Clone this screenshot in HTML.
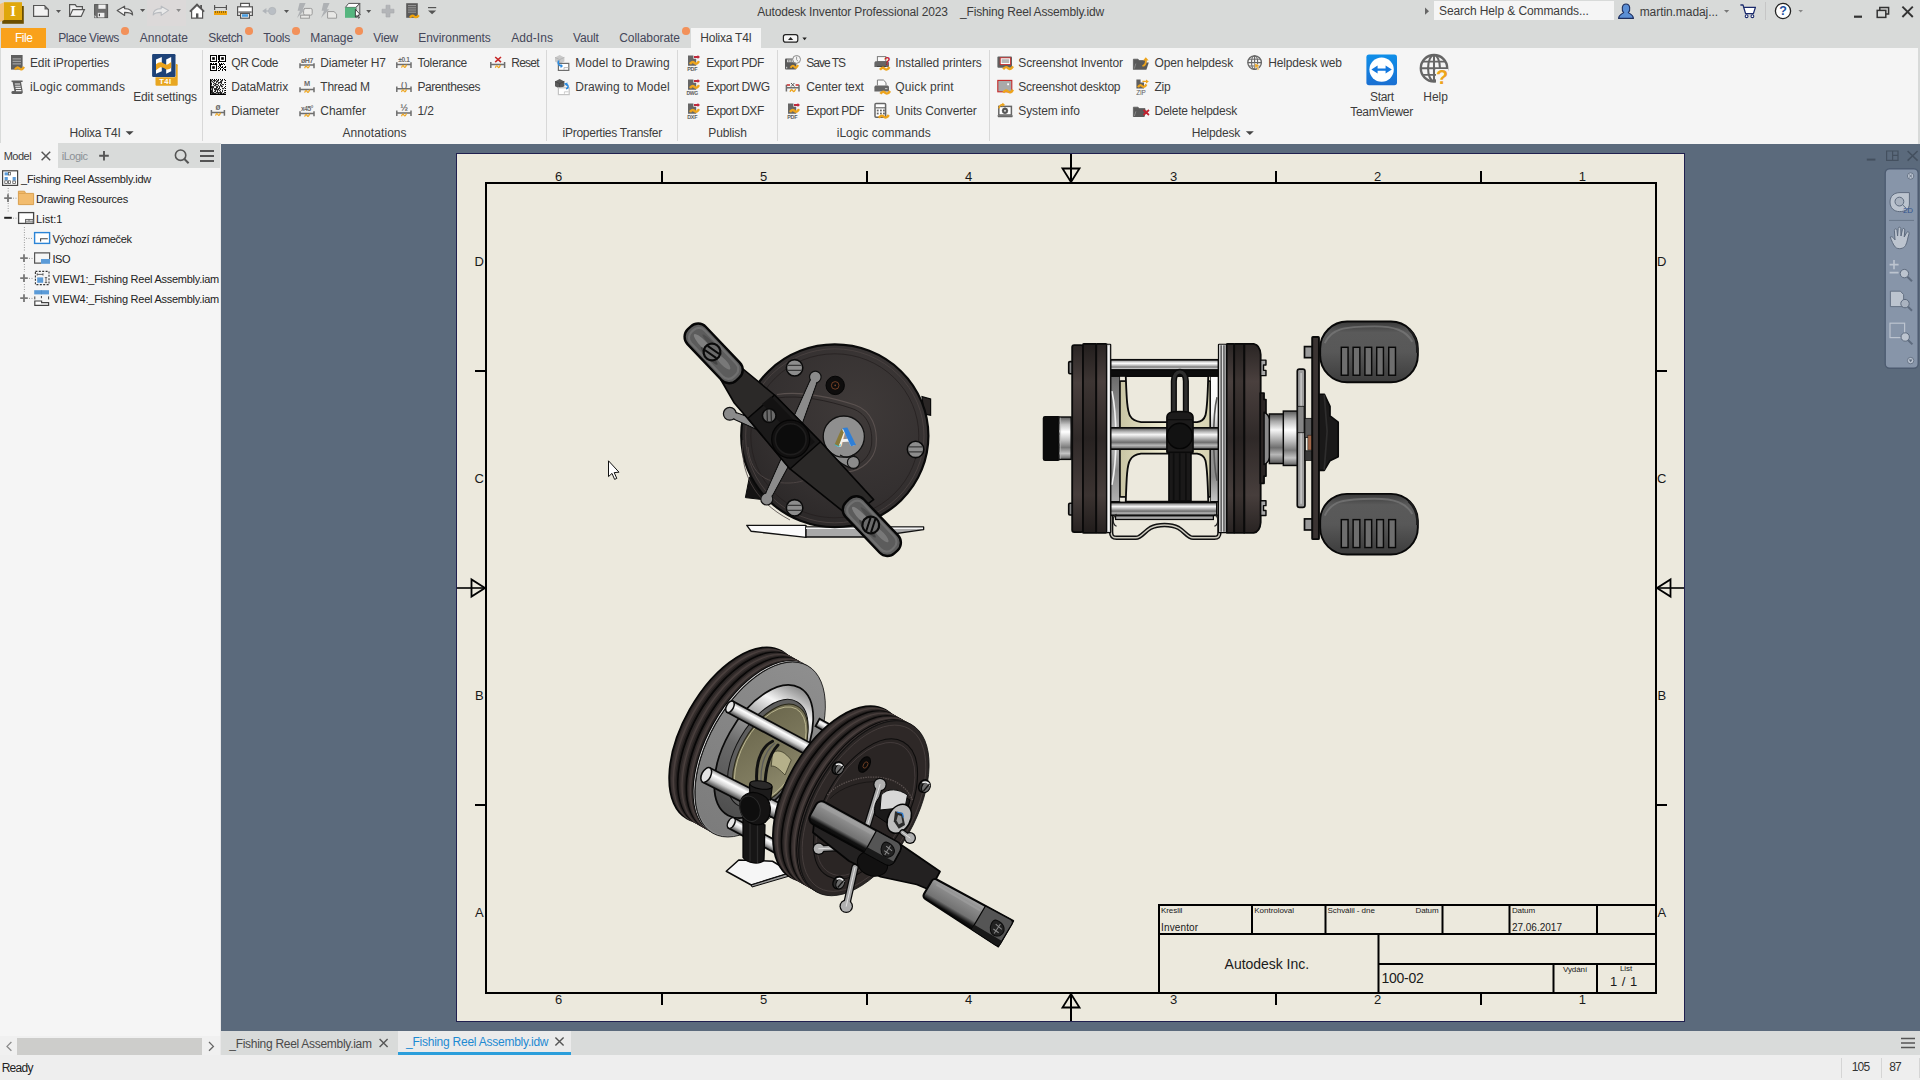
<!DOCTYPE html>
<html><head><meta charset="utf-8"><title>Autodesk Inventor Professional 2023 - _Fishing Reel Assembly.idw</title>
<style>
html,body{margin:0;padding:0;}
body{width:1920px;height:1080px;overflow:hidden;position:relative;background:#d8dad9;font-family:"Liberation Sans",sans-serif;}
.b{position:absolute;display:block;}
.t{position:absolute;white-space:pre;line-height:20px;height:20px;font-family:"Liberation Sans",sans-serif;}
svg{overflow:visible;}
svg text{font-family:"Liberation Sans",sans-serif;}
</style></head><body>
<div class="b" style="left:147px;top:0px;width:39px;height:26px;background:#dcd9d9;"></div>
<div class="b" style="left:1px;top:48px;width:1917px;height:96px;background:#f5f5f5;"></div>
<div class="b" style="left:1px;top:28px;width:45px;height:20px;background:#f9a11b;"></div>
<span class="t" style="left:15.0px;top:28px;font-size:12px;color:#ffffff;letter-spacing:-0.459px;">File</span>
<div class="b" style="left:691px;top:28px;width:70px;height:20px;background:#f5f5f5;"></div>
<span class="t" style="left:58.3px;top:28px;font-size:12px;color:#45475a;letter-spacing:-0.431px;">Place Views</span>
<span class="t" style="left:139.7px;top:28px;font-size:12px;color:#45475a;letter-spacing:0.032px;">Annotate</span>
<span class="t" style="left:208.3px;top:28px;font-size:12px;color:#45475a;letter-spacing:-0.414px;">Sketch</span>
<span class="t" style="left:263.3px;top:28px;font-size:12px;color:#45475a;letter-spacing:-0.263px;">Tools</span>
<span class="t" style="left:310.3px;top:28px;font-size:12px;color:#45475a;letter-spacing:-0.111px;">Manage</span>
<span class="t" style="left:373.3px;top:28px;font-size:12px;color:#45475a;letter-spacing:-0.273px;">View</span>
<span class="t" style="left:418.3px;top:28px;font-size:12px;color:#45475a;letter-spacing:-0.072px;">Environments</span>
<span class="t" style="left:511.3px;top:28px;font-size:12px;color:#45475a;letter-spacing:0.049px;">Add-Ins</span>
<span class="t" style="left:573.0px;top:28px;font-size:12px;color:#45475a;letter-spacing:-0.152px;">Vault</span>
<span class="t" style="left:619.2px;top:28px;font-size:12px;color:#45475a;letter-spacing:-0.052px;">Collaborate</span>
<span class="t" style="left:700.3px;top:28px;font-size:12px;color:#3c3c3c;letter-spacing:-0.240px;">Holixa T4I</span>
<div class="b" style="left:121.2px;top:27.2px;width:7.6px;height:7.6px;border-radius:50%;background:#f2915a"></div>
<div class="b" style="left:245.0px;top:27.2px;width:7.6px;height:7.6px;border-radius:50%;background:#f2915a"></div>
<div class="b" style="left:292.0px;top:27.2px;width:7.6px;height:7.6px;border-radius:50%;background:#f2915a"></div>
<div class="b" style="left:355.4px;top:27.2px;width:7.6px;height:7.6px;border-radius:50%;background:#f2915a"></div>
<div class="b" style="left:682.0px;top:27.2px;width:7.6px;height:7.6px;border-radius:50%;background:#f2915a"></div>
<span class="t" style="left:757.2px;top:2px;font-size:12px;color:#3c3c3c;letter-spacing:-0.161px;">Autodesk Inventor Professional 2023</span>
<span class="t" style="left:960.0px;top:2px;font-size:12px;color:#3c3c3c;letter-spacing:-0.173px;">_Fishing Reel Assembly.idw</span>
<div class="b" style="left:1434px;top:1px;width:180px;height:19px;background:#f5f5f5;"></div>
<span class="t" style="left:1439.0px;top:1px;font-size:12px;color:#3c3c3c;letter-spacing:-0.094px;">Search Help &amp; Commands...</span>
<span class="t" style="left:1639.7px;top:2px;font-size:12px;color:#3c3c3c;letter-spacing:-0.071px;">martin.madaj...</span>
<div class="b" style="left:202px;top:50px;width:1px;height:91px;background:#d8d8d8;"></div>
<div class="b" style="left:546px;top:50px;width:1px;height:91px;background:#d8d8d8;"></div>
<div class="b" style="left:677px;top:50px;width:1px;height:91px;background:#d8d8d8;"></div>
<div class="b" style="left:777px;top:50px;width:1px;height:91px;background:#d8d8d8;"></div>
<div class="b" style="left:989px;top:50px;width:1px;height:91px;background:#d8d8d8;"></div>
<span class="t" style="left:69.5px;top:123px;font-size:12px;color:#3c3c3c;letter-spacing:-0.280px;">Holixa T4I</span>
<span class="t" style="left:342.5px;top:123px;font-size:12px;color:#3c3c3c;letter-spacing:0.074px;">Annotations</span>
<span class="t" style="left:562.5px;top:123px;font-size:12px;color:#3c3c3c;letter-spacing:-0.260px;">iProperties Transfer</span>
<span class="t" style="left:708.3px;top:123px;font-size:12px;color:#3c3c3c;letter-spacing:-0.137px;">Publish</span>
<span class="t" style="left:836.7px;top:123px;font-size:12px;color:#3c3c3c;letter-spacing:0.048px;">iLogic commands</span>
<span class="t" style="left:1191.7px;top:123px;font-size:12px;color:#3c3c3c;letter-spacing:-0.216px;">Helpdesk</span>
<span class="t" style="left:30.0px;top:53px;font-size:12px;color:#3c3c3c;letter-spacing:-0.136px;">Edit iProperties</span>
<span class="t" style="left:30.0px;top:77px;font-size:12px;color:#3c3c3c;letter-spacing:0.108px;">iLogic commands</span>
<span class="t" style="left:231.3px;top:53px;font-size:12px;color:#3c3c3c;letter-spacing:-0.474px;">QR Code</span>
<span class="t" style="left:231.3px;top:77px;font-size:12px;color:#3c3c3c;letter-spacing:-0.131px;">DataMatrix</span>
<span class="t" style="left:231.3px;top:101px;font-size:12px;color:#3c3c3c;letter-spacing:-0.122px;">Diameter</span>
<span class="t" style="left:320.3px;top:53px;font-size:12px;color:#3c3c3c;letter-spacing:-0.169px;">Diameter H7</span>
<span class="t" style="left:320.3px;top:77px;font-size:12px;color:#3c3c3c;letter-spacing:-0.244px;">Thread M</span>
<span class="t" style="left:320.3px;top:101px;font-size:12px;color:#3c3c3c;letter-spacing:-0.073px;">Chamfer</span>
<span class="t" style="left:417.5px;top:53px;font-size:12px;color:#3c3c3c;letter-spacing:-0.281px;">Tolerance</span>
<span class="t" style="left:417.5px;top:77px;font-size:12px;color:#3c3c3c;letter-spacing:-0.443px;">Parentheses</span>
<span class="t" style="left:417.5px;top:101px;font-size:12px;color:#3c3c3c;letter-spacing:-0.127px;">1/2</span>
<span class="t" style="left:511.3px;top:53px;font-size:12px;color:#3c3c3c;letter-spacing:-0.770px;">Reset</span>
<span class="t" style="left:575.3px;top:53px;font-size:12px;color:#3c3c3c;letter-spacing:0.064px;">Model to Drawing</span>
<span class="t" style="left:575.3px;top:77px;font-size:12px;color:#3c3c3c;letter-spacing:0.064px;">Drawing to Model</span>
<span class="t" style="left:706.3px;top:53px;font-size:12px;color:#3c3c3c;letter-spacing:-0.452px;">Export PDF</span>
<span class="t" style="left:706.3px;top:77px;font-size:12px;color:#3c3c3c;letter-spacing:-0.394px;">Export DWG</span>
<span class="t" style="left:706.3px;top:101px;font-size:12px;color:#3c3c3c;letter-spacing:-0.452px;">Export DXF</span>
<span class="t" style="left:806.3px;top:53px;font-size:12px;color:#3c3c3c;letter-spacing:-1.015px;">Save TS</span>
<span class="t" style="left:806.3px;top:77px;font-size:12px;color:#3c3c3c;letter-spacing:-0.108px;">Center text</span>
<span class="t" style="left:806.3px;top:101px;font-size:12px;color:#3c3c3c;letter-spacing:-0.432px;">Export PDF</span>
<span class="t" style="left:895.3px;top:53px;font-size:12px;color:#3c3c3c;letter-spacing:-0.091px;">Installed printers</span>
<span class="t" style="left:895.3px;top:77px;font-size:12px;color:#3c3c3c;letter-spacing:0.104px;">Quick print</span>
<span class="t" style="left:895.3px;top:101px;font-size:12px;color:#3c3c3c;letter-spacing:-0.131px;">Units Converter</span>
<span class="t" style="left:1018.3px;top:53px;font-size:12px;color:#3c3c3c;letter-spacing:-0.152px;">Screenshot Inventor</span>
<span class="t" style="left:1018.3px;top:77px;font-size:12px;color:#3c3c3c;letter-spacing:-0.226px;">Screenshot desktop</span>
<span class="t" style="left:1018.3px;top:101px;font-size:12px;color:#3c3c3c;letter-spacing:-0.117px;">System info</span>
<span class="t" style="left:1154.5px;top:53px;font-size:12px;color:#3c3c3c;letter-spacing:-0.171px;">Open helpdesk</span>
<span class="t" style="left:1154.5px;top:77px;font-size:12px;color:#3c3c3c;letter-spacing:-0.223px;">Zip</span>
<span class="t" style="left:1154.5px;top:101px;font-size:12px;color:#3c3c3c;letter-spacing:-0.237px;">Delete helpdesk</span>
<span class="t" style="left:1268.3px;top:53px;font-size:12px;color:#3c3c3c;letter-spacing:-0.165px;">Helpdesk web</span>
<span class="t" style="left:133.2px;top:87px;font-size:12px;color:#3c3c3c;letter-spacing:-0.121px;">Edit settings</span>
<span class="t" style="left:1370.0px;top:87px;font-size:12px;color:#3c3c3c;letter-spacing:-0.308px;">Start</span>
<span class="t" style="left:1350.3px;top:102px;font-size:12px;color:#3c3c3c;letter-spacing:-0.331px;">TeamViewer</span>
<span class="t" style="left:1423.3px;top:87px;font-size:12px;color:#3c3c3c;letter-spacing:-0.045px;">Help</span>
<div class="b" style="left:0px;top:144px;width:220px;height:911px;background:#f5f5f5;"></div>
<div class="b" style="left:0px;top:143px;width:221px;height:25px;background:#d9dbda;"></div>
<div class="b" style="left:0px;top:143px;width:58px;height:25px;background:#f5f5f5;"></div>
<div class="b" style="left:220px;top:144px;width:1px;height:911px;background:#e8e8e8;"></div>
<span class="t" style="left:3.7px;top:146px;font-size:11px;color:#3c3c3c;letter-spacing:-0.492px;">Model</span>
<span class="t" style="left:61.7px;top:146px;font-size:11px;color:#8b9096;letter-spacing:-0.490px;">iLogic</span>
<span class="t" style="left:21.0px;top:169px;font-size:11px;color:#222;letter-spacing:-0.236px;">_Fishing Reel Assembly.idw</span>
<span class="t" style="left:36.0px;top:189px;font-size:11px;color:#222;letter-spacing:-0.234px;">Drawing Resources</span>
<span class="t" style="left:36.0px;top:209px;font-size:11px;color:#222;letter-spacing:0.035px;">List:1</span>
<span class="t" style="left:52.5px;top:229px;font-size:11px;color:#222;letter-spacing:-0.344px;">Výchozí rámeček</span>
<span class="t" style="left:52.5px;top:249px;font-size:11px;color:#222;letter-spacing:-0.483px;">ISO</span>
<span class="t" style="left:52.5px;top:269px;font-size:11px;color:#222;letter-spacing:-0.254px;">VIEW1:_Fishing Reel Assembly.iam</span>
<span class="t" style="left:52.5px;top:289px;font-size:11px;color:#222;letter-spacing:-0.254px;">VIEW4:_Fishing Reel Assembly.iam</span>
<div class="b" style="left:0px;top:1036px;width:220px;height:19px;background:#f0f0f0;"></div>
<div class="b" style="left:17px;top:1038px;width:185px;height:17px;background:#cdcdcb;"></div>
<div class="b" style="left:221px;top:144px;width:1699px;height:887px;background:#5b6a7c;"></div>
<div class="b" style="left:221px;top:1031px;width:1699px;height:24px;background:#d9dbda;"></div>
<div class="b" style="left:398px;top:1031px;width:173px;height:22px;background:#ebebeb;"></div>
<div class="b" style="left:398px;top:1052px;width:173px;height:3px;background:#2b9edb;"></div>
<span class="t" style="left:229.3px;top:1034px;font-size:12px;color:#4a4a4a;letter-spacing:-0.286px;">_Fishing Reel Assembly.iam</span>
<span class="t" style="left:406.0px;top:1032px;font-size:12px;color:#1e8ad2;letter-spacing:-0.239px;">_Fishing Reel Assembly.idw</span>
<div class="b" style="left:0px;top:1055px;width:1920px;height:25px;background:#eeeeee;"></div>
<span class="t" style="left:1.7px;top:1058px;font-size:12px;color:#222;letter-spacing:-0.737px;">Ready</span>
<span class="t" style="left:1851.7px;top:1057px;font-size:12px;color:#333;letter-spacing:-0.807px;">105</span>
<span class="t" style="left:1889.3px;top:1057px;font-size:12px;color:#333;letter-spacing:-0.974px;">87</span>
<div class="b" style="left:1841px;top:1058px;width:1px;height:20px;background:#d5d5d5;"></div>
<div class="b" style="left:1881px;top:1058px;width:1px;height:20px;background:#d5d5d5;"></div>
<div class="b" style="left:1919px;top:1058px;width:1px;height:20px;background:#d5d5d5;"></div>
<div class="b" style="left:456px;top:153px;width:1229px;height:869px;background:#20204f;"></div>
<div class="b" style="left:457px;top:154px;width:1227px;height:867px;background:#ece9dd;"></div>
<svg class="b" style="left:0px;top:0px;" width="1920" height="1080" viewBox="0 0 1920 1080"><rect x="486" y="183" width="1170" height="810" fill="none" stroke="#000" stroke-width="2"/><line x1="662" y1="171" x2="662" y2="183" stroke="#000" stroke-width="2"/><line x1="662" y1="993" x2="662" y2="1005" stroke="#000" stroke-width="2"/><line x1="867" y1="171" x2="867" y2="183" stroke="#000" stroke-width="2"/><line x1="867" y1="993" x2="867" y2="1005" stroke="#000" stroke-width="2"/><line x1="1276" y1="171" x2="1276" y2="183" stroke="#000" stroke-width="2"/><line x1="1276" y1="993" x2="1276" y2="1005" stroke="#000" stroke-width="2"/><line x1="1481" y1="171" x2="1481" y2="183" stroke="#000" stroke-width="2"/><line x1="1481" y1="993" x2="1481" y2="1005" stroke="#000" stroke-width="2"/><line x1="475" y1="371" x2="486" y2="371" stroke="#000" stroke-width="2"/><line x1="1656" y1="371" x2="1667" y2="371" stroke="#000" stroke-width="2"/><line x1="475" y1="805" x2="486" y2="805" stroke="#000" stroke-width="2"/><line x1="1656" y1="805" x2="1667" y2="805" stroke="#000" stroke-width="2"/><line x1="1071" y1="154" x2="1071" y2="183" stroke="#000" stroke-width="2"/><line x1="1071" y1="993" x2="1071" y2="1021" stroke="#000" stroke-width="2"/><path d="M1062.5 168.5 L1079.5 168.5 L1071 182 Z" fill="none" stroke="#000" stroke-width="1.8"/><path d="M1062.5 1007.5 L1079.5 1007.5 L1071 994 Z" fill="none" stroke="#000" stroke-width="1.8"/><line x1="457" y1="588" x2="486" y2="588" stroke="#000" stroke-width="1.6"/><line x1="1656" y1="588" x2="1684" y2="588" stroke="#000" stroke-width="1.6"/><path d="M471.5 579.5 L471.5 596.5 L485 588 Z" fill="none" stroke="#000" stroke-width="1.8"/><path d="M1670.5 579.5 L1670.5 596.5 L1657 588 Z" fill="none" stroke="#000" stroke-width="1.8"/><line x1="1158" y1="905" x2="1656" y2="905" stroke="#000" stroke-width="2"/><line x1="1158" y1="934" x2="1656" y2="934" stroke="#000" stroke-width="2"/><line x1="1378" y1="964" x2="1656" y2="964" stroke="#000" stroke-width="2"/><line x1="1159" y1="904" x2="1159" y2="993" stroke="#000" stroke-width="2"/><line x1="1252" y1="905" x2="1252" y2="934" stroke="#000" stroke-width="2"/><line x1="1325.5" y1="905" x2="1325.5" y2="934" stroke="#000" stroke-width="2"/><line x1="1442.5" y1="905" x2="1442.5" y2="934" stroke="#000" stroke-width="2"/><line x1="1509.5" y1="905" x2="1509.5" y2="934" stroke="#000" stroke-width="2"/><line x1="1597" y1="905" x2="1597" y2="934" stroke="#000" stroke-width="2"/><line x1="1378.5" y1="934" x2="1378.5" y2="993" stroke="#000" stroke-width="2"/><line x1="1553.5" y1="964" x2="1553.5" y2="993" stroke="#000" stroke-width="2"/><line x1="1597" y1="964" x2="1597" y2="993" stroke="#000" stroke-width="2"/></svg>
<span class="t" style="left:555.1px;top:167px;font-size:13px;color:#1a1a1a;">6</span>
<span class="t" style="left:555.1px;top:990px;font-size:13px;color:#1a1a1a;">6</span>
<span class="t" style="left:759.9px;top:167px;font-size:13px;color:#1a1a1a;">5</span>
<span class="t" style="left:759.9px;top:990px;font-size:13px;color:#1a1a1a;">5</span>
<span class="t" style="left:964.9px;top:167px;font-size:13px;color:#1a1a1a;">4</span>
<span class="t" style="left:964.9px;top:990px;font-size:13px;color:#1a1a1a;">4</span>
<span class="t" style="left:1169.9px;top:167px;font-size:13px;color:#1a1a1a;">3</span>
<span class="t" style="left:1169.9px;top:990px;font-size:13px;color:#1a1a1a;">3</span>
<span class="t" style="left:1373.9px;top:167px;font-size:13px;color:#1a1a1a;">2</span>
<span class="t" style="left:1373.9px;top:990px;font-size:13px;color:#1a1a1a;">2</span>
<span class="t" style="left:1578.7px;top:167px;font-size:13px;color:#1a1a1a;">1</span>
<span class="t" style="left:1578.7px;top:990px;font-size:13px;color:#1a1a1a;">1</span>
<span class="t" style="left:474.5px;top:252px;font-size:13px;color:#1a1a1a;">D</span>
<span class="t" style="left:1657.0px;top:252px;font-size:13px;color:#1a1a1a;">D</span>
<span class="t" style="left:474.5px;top:469px;font-size:13px;color:#1a1a1a;">C</span>
<span class="t" style="left:1657.0px;top:469px;font-size:13px;color:#1a1a1a;">C</span>
<span class="t" style="left:474.9px;top:686px;font-size:13px;color:#1a1a1a;">B</span>
<span class="t" style="left:1657.4px;top:686px;font-size:13px;color:#1a1a1a;">B</span>
<span class="t" style="left:474.9px;top:903px;font-size:13px;color:#1a1a1a;">A</span>
<span class="t" style="left:1657.4px;top:903px;font-size:13px;color:#1a1a1a;">A</span>
<span class="t" style="left:1161.0px;top:901px;font-size:8px;color:#1a1a1a;letter-spacing:-0.069px;">Kreslil</span>
<span class="t" style="left:1254.3px;top:901px;font-size:8px;color:#1a1a1a;letter-spacing:-0.029px;">Kontroloval</span>
<span class="t" style="left:1327.5px;top:901px;font-size:8px;color:#1a1a1a;letter-spacing:-0.052px;">Schválil - dne</span>
<span class="t" style="left:1415.6px;top:901px;font-size:8px;color:#1a1a1a;letter-spacing:-0.152px;">Datum</span>
<span class="t" style="left:1511.9px;top:901px;font-size:8px;color:#1a1a1a;letter-spacing:-0.093px;">Datum</span>
<span class="t" style="left:1161.0px;top:918px;font-size:10px;color:#1a1a1a;letter-spacing:0.146px;">Inventor</span>
<span class="t" style="left:1511.9px;top:918px;font-size:10px;color:#1a1a1a;letter-spacing:0.005px;">27.06.2017</span>
<span class="t" style="left:1224.6px;top:954px;font-size:14px;color:#1a1a1a;letter-spacing:-0.033px;">Autodesk Inc.</span>
<span class="t" style="left:1381.5px;top:968px;font-size:14px;color:#1a1a1a;letter-spacing:-0.265px;">100-02</span>
<span class="t" style="left:1563.0px;top:960px;font-size:8px;color:#1a1a1a;letter-spacing:-0.102px;">Vydání</span>
<span class="t" style="left:1620.0px;top:959px;font-size:8px;color:#1a1a1a;letter-spacing:-0.112px;">List</span>
<span class="t" style="left:1610.0px;top:972px;font-size:13px;color:#1a1a1a;letter-spacing:0.481px;">1 / 1</span>
<svg class="b" style="left:0px;top:0px;" width="1920" height="1080" viewBox="0 0 1920 1080"><defs>
<radialGradient id="discg" cx="0.62" cy="0.35" r="0.8"><stop offset="0" stop-color="#3f3a39"/><stop offset="0.6" stop-color="#343030"/><stop offset="1" stop-color="#272424"/></radialGradient>
<linearGradient id="knobg" x1="0" y1="0" x2="0" y2="1"><stop offset="0" stop-color="#474747"/><stop offset="0.35" stop-color="#7c7c7c"/><stop offset="0.6" stop-color="#636363"/><stop offset="1" stop-color="#404040"/></linearGradient>
<linearGradient id="silverv" x1="0" y1="0" x2="0" y2="1"><stop offset="0" stop-color="#4a4a4a"/><stop offset="0.15" stop-color="#a8a8a8"/><stop offset="0.32" stop-color="#f6f6f6"/><stop offset="0.5" stop-color="#b4b4b4"/><stop offset="0.68" stop-color="#6e6e6e"/><stop offset="0.82" stop-color="#b8b8b8"/><stop offset="1" stop-color="#555"/></linearGradient>
<linearGradient id="silverv2" x1="0" y1="0" x2="0" y2="1"><stop offset="0" stop-color="#5a5a5a"/><stop offset="0.18" stop-color="#c4c4c4"/><stop offset="0.35" stop-color="#ffffff"/><stop offset="0.55" stop-color="#c0c0c0"/><stop offset="0.72" stop-color="#7a7a7a"/><stop offset="0.86" stop-color="#c4c4c4"/><stop offset="1" stop-color="#5f5f5f"/></linearGradient>
<linearGradient id="platev" x1="0" y1="0" x2="0" y2="1"><stop offset="0" stop-color="#2a2524"/><stop offset="0.2" stop-color="#4a403e"/><stop offset="0.5" stop-color="#2f2928"/><stop offset="0.8" stop-color="#473e3c"/><stop offset="1" stop-color="#282322"/></linearGradient>
<linearGradient id="platev2" x1="0" y1="0" x2="0" y2="1"><stop offset="0" stop-color="#221e1d"/><stop offset="0.2" stop-color="#3d3533"/><stop offset="0.5" stop-color="#272221"/><stop offset="0.8" stop-color="#3b3331"/><stop offset="1" stop-color="#201c1b"/></linearGradient>
<linearGradient id="footg" x1="0" y1="0" x2="1" y2="0"><stop offset="0" stop-color="#ffffff"/><stop offset="0.32" stop-color="#f4f4f4"/><stop offset="0.33" stop-color="#8a8a8a"/><stop offset="0.6" stop-color="#b5b5b5"/><stop offset="1" stop-color="#f0f0f0"/></linearGradient>
<linearGradient id="knob2g" x1="0" y1="0" x2="0" y2="1"><stop offset="0" stop-color="#3a3a3a"/><stop offset="0.18" stop-color="#5a5a5a"/><stop offset="0.5" stop-color="#585858"/><stop offset="1" stop-color="#3c3c3c"/></linearGradient>
<linearGradient id="creamh" x1="0" y1="0" x2="1" y2="0"><stop offset="0" stop-color="#c9c5a4"/><stop offset="0.5" stop-color="#efecd2"/><stop offset="1" stop-color="#d6d2b2"/></linearGradient>
</defs><g><path d="M746.8 525.4 H806 V537.4 L751 531.2 Z" fill="#fbfbfb" stroke="#111" stroke-width="1.4" stroke-linejoin="round"/><path d="M806 527 H923.6 V529.6 L872 537 H806 Z" fill="#a9a9a9" stroke="#111" stroke-width="1.4" stroke-linejoin="round"/><path d="M806 527.6 H923 V529 H806 Z" fill="#f4f4f4"/><path d="M922 396.6 L930.6 399 V415.2 L924 414 Z" fill="#2a2625" stroke="#0a0a0a" stroke-width="1.2"/><path d="M749.4 477 L745.4 497.6 L766 500 L754 480 Z" fill="#141313" stroke="#0a0a0a" stroke-width="1"/><ellipse cx="834.8" cy="435.8" rx="93.6" ry="91.4" fill="url(#discg)" stroke="#0a0a0a" stroke-width="2.2"/><ellipse cx="834.8" cy="435.8" rx="89.2" ry="87" fill="none" stroke="#4a4241" stroke-width="0.9"/><ellipse cx="834.8" cy="435.8" rx="84" ry="82" fill="none" stroke="#241f1f" stroke-width="0.8"/><path d="M777 394.5 C800 391 830 397 855 405 C872 411 878 428 876 446 C874 460 862 470 848 472" fill="none" stroke="#5a514f" stroke-width="1.1"/><path d="M777 398 C800 394.5 828 400.5 852 408.5 C868 414 873 429 871.5 445 C870 457 860 466 848 468" fill="none" stroke="#241f1f" stroke-width="0.9"/><path d="M748 447 C750 470 762 484 790 483 C800 482.6 806 480 812 476" fill="none" stroke="#4c4443" stroke-width="1"/><path d="M743 440 C740 470 752 500 790 520" fill="none" stroke="#4a4241" stroke-width="0.8"/><path d="M801.0 427.0 L818.5 378.3 L812.1 375.7 L791.0 423.0 Z" fill="#8b8b8b" stroke="#111" stroke-width="1.2"/><circle cx="815.3" cy="377" r="5.8" fill="#8b8b8b" stroke="#111" stroke-width="1.2"/><path d="M800.4 426.8 L817.8 378.0 L812.8 376.0 L791.6 423.2 Z" fill="#8b8b8b"/><path d="M771.9 425.4 L731.0 410.8 L728.6 416.8 L768.1 434.6 Z" fill="#8b8b8b" stroke="#111" stroke-width="1.2"/><circle cx="729.8" cy="413.8" r="6.4" fill="#8b8b8b" stroke="#111" stroke-width="1.2"/><path d="M771.6 426.0 L730.7 411.5 L728.9 416.1 L768.4 434.0 Z" fill="#8b8b8b"/><path d="M785.2 449.6 L763.8 497.5 L769.8 500.5 L794.8 454.4 Z" fill="#8b8b8b" stroke="#111" stroke-width="1.2"/><circle cx="766.8" cy="499" r="6" fill="#8b8b8b" stroke="#111" stroke-width="1.2"/><path d="M785.8 449.9 L764.4 497.8 L769.2 500.2 L794.2 454.1 Z" fill="#8b8b8b"/><path d="M828 452 C838 462 846 467 853 468.6 C858 469 860 464 858 460 C855 455 850 452 846 450 Z" fill="#8b8b8b" stroke="#111" stroke-width="1.2"/><circle cx="853.4" cy="462.4" r="6" fill="#8b8b8b" stroke="#111" stroke-width="1.2"/><circle cx="843.8" cy="436.6" r="20.6" fill="#8f8f8f" stroke="#111" stroke-width="1.3"/><path d="M840 455 C846 459 851 457 853 455" fill="none" stroke="#111" stroke-width="1.2"/><text x="845.4" y="446.2" font-size="25" font-weight="bold" fill="#f2f2f2" text-anchor="middle" transform="rotate(-4 845 437)" style="font-family:'Liberation Sans',sans-serif">A</text><path d="M842.6 428 L847.4 427.4 L856 445 L851 446.2 Z" fill="#2f7fd6"/><path d="M841.6 428.4 L843.8 432.4 L838.6 446.6 L834.6 444.6 Z" fill="#8a7a3a"/><path d="M834.6 444.6 L838.6 446.6 L841 444.6" fill="none" stroke="#3fb8c8" stroke-width="1"/><circle cx="835.2" cy="385.4" r="9.2" fill="#0e0d0d" stroke="#050505" stroke-width="1"/><circle cx="835.2" cy="385.4" r="3.8" fill="none" stroke="#8a4a28" stroke-width="0.8"/><circle cx="835.2" cy="385.4" r="0.8" fill="#8a4a28"/><g transform="translate(794.6 367.8) rotate(0)"><circle r="8.2" fill="#8d8d8d" stroke="#0a0a0a" stroke-width="1.6"/><path d="M-7.0 -2.5 H7.0 M-7.0 2.5 H7.0" stroke="#3a3a3a" stroke-width="1.3" fill="none"/></g><g transform="translate(915.6 449.4) rotate(0)"><circle r="8.2" fill="#8d8d8d" stroke="#0a0a0a" stroke-width="1.6"/><path d="M-7.0 -2.5 H7.0 M-7.0 2.5 H7.0" stroke="#3a3a3a" stroke-width="1.3" fill="none"/></g><g transform="translate(794.6 507.8) rotate(0)"><circle r="8.2" fill="#8d8d8d" stroke="#0a0a0a" stroke-width="1.6"/><path d="M-7.0 -2.5 H7.0 M-7.0 2.5 H7.0" stroke="#3a3a3a" stroke-width="1.3" fill="none"/></g><path d="M737 364 L774.5 395 L820.5 441.7 L873.6 499.6 L850 517 L790 468.9 L749 420 L734.3 403 L721 380 Z" fill="#2b2928" stroke="#050505" stroke-width="1.6" stroke-linejoin="round"/><path d="M774.5 395 L820.5 441.7 L790 468.9 L747.9 418.3 Z" fill="#1b1a1a" stroke="#050505" stroke-width="1.4" stroke-linejoin="round"/><path d="M762 404 L771 396.6 L815 442 L806 449 Z" fill="#131212"/><circle cx="790.7" cy="439.2" r="19" fill="#111010" stroke="#050505" stroke-width="1.2"/><circle cx="790.7" cy="439.2" r="15.4" fill="#0c0c0c" stroke="#1e1d1d" stroke-width="1.6"/><g transform="translate(769.2 415.6) rotate(88)"><circle r="6.8" fill="#6a6a6a" stroke="#0a0a0a" stroke-width="1.6"/><path d="M-5.8 -2.0 H5.8 M-5.8 2.0 H5.8" stroke="#2a2a2a" stroke-width="1.3" fill="none"/></g><g transform="translate(711.4 351) rotate(46.5)"><rect x="-32" y="-12.6" width="70.5" height="25.2" rx="10.5" fill="#5c5c5c" stroke="#060606" stroke-width="2.4"/><rect x="-27.5" y="-9.4" width="61.5" height="18.8" rx="8" fill="none" stroke="#747474" stroke-width="2.2" opacity="0.8"/><ellipse cx="-10" cy="1" rx="14" ry="3.4" fill="#8c8c8c" opacity="0.75"/><ellipse cx="16" cy="-1" rx="10" ry="3" fill="#858585" opacity="0.7"/><ellipse cx="2" cy="5" rx="12" ry="2.4" fill="#3c3c3c" opacity="0.7"/><ellipse cx="-4" cy="-5" rx="14" ry="2.2" fill="#444" opacity="0.6"/></g><g transform="translate(869.6 523.8) rotate(46.5)"><rect x="-32" y="-12.6" width="70.5" height="25.2" rx="10.5" fill="#5c5c5c" stroke="#060606" stroke-width="2.4"/><rect x="-27.5" y="-9.4" width="61.5" height="18.8" rx="8" fill="none" stroke="#747474" stroke-width="2.2" opacity="0.8"/><ellipse cx="-10" cy="1" rx="14" ry="3.4" fill="#8c8c8c" opacity="0.75"/><ellipse cx="16" cy="-1" rx="10" ry="3" fill="#858585" opacity="0.7"/><ellipse cx="2" cy="5" rx="12" ry="2.4" fill="#3c3c3c" opacity="0.7"/><ellipse cx="-4" cy="-5" rx="14" ry="2.2" fill="#444" opacity="0.6"/></g><g transform="translate(712 352) rotate(35)"><circle r="8.4" fill="#6a6a6a" stroke="#0a0a0a" stroke-width="2.2"/><path d="M-7.1 -2.5 H7.1 M-7.1 2.5 H7.1" stroke="#0a0a0a" stroke-width="2" fill="none"/></g><g transform="translate(870.8 525) rotate(-72)"><circle r="8.4" fill="#6a6a6a" stroke="#0a0a0a" stroke-width="2.2"/><path d="M-7.1 -2.5 H7.1 M-7.1 2.5 H7.1" stroke="#0a0a0a" stroke-width="2" fill="none"/></g></g><g transform="translate(1030 330) scale(0.203761)"><path d="M398 905 V990 C398 1012 405 1020 425 1020 H520 C545 1020 560 990 590 972 C630 952 690 952 730 972 C760 990 775 1020 800 1020 H905 C925 1020 930 1012 930 990 V905" fill="none" stroke="#111" stroke-width="22" stroke-linejoin="round" /><path d="M398 905 V990 C398 1012 405 1020 425 1020 H520 C545 1020 560 990 590 972 C630 952 690 952 730 972 C760 990 775 1020 800 1020 H905 C925 1020 930 1012 930 990 V905" fill="none" stroke="#cfccc0" stroke-width="7" stroke-linejoin="round" /><rect x="66" y="425" width="78" height="215" rx="8" fill="#0b0b0b" stroke="#0a0a0a" stroke-width="7" /><rect x="140" y="427" width="62" height="208" rx="0" fill="url(#silverv2)" stroke="#0a0a0a" stroke-width="7" /><path d="M150 430 V632" fill="none" stroke="#bdbdbd" stroke-width="3" stroke-linejoin="round" /><path d="M143 428 V634" fill="none" stroke="#333" stroke-width="6" stroke-linejoin="round" stroke-dasharray="3 3"/><rect x="190" y="155" width="22" height="60" rx="6" fill="#8d8d8d" stroke="#0a0a0a" stroke-width="8" /><rect x="190" y="850" width="22" height="58" rx="6" fill="#8d8d8d" stroke="#0a0a0a" stroke-width="8" /><linearGradient id="coneL" x1="0" y1="0" x2="0" y2="1"><stop offset="0" stop-color="#6a6a6a"/><stop offset="0.25" stop-color="#8c8c8c"/><stop offset="0.5" stop-color="#c4c4c4"/><stop offset="0.75" stop-color="#8a8a8a"/><stop offset="1" stop-color="#b0b0b0"/></linearGradient><linearGradient id="coneR" x1="0" y1="0" x2="0" y2="1"><stop offset="0" stop-color="#ffffff"/><stop offset="0.3" stop-color="#f4f4f4"/><stop offset="0.5" stop-color="#9a9a9a"/><stop offset="0.8" stop-color="#8a8a8a"/><stop offset="1" stop-color="#c8c8c8"/></linearGradient><path d="M395 226 H442 V843 H395 Z" fill="url(#coneL)" stroke="#0a0a0a" stroke-width="7" stroke-linejoin="round" /><path d="M925 226 H884 V843 H925 Z" fill="url(#coneR)" stroke="#0a0a0a" stroke-width="7" stroke-linejoin="round" /><path d="M402 300 C428 420 428 640 402 760" fill="none" stroke="#f0f0f0" stroke-width="8" stroke-linejoin="round" /><path d="M918 330 C896 420 896 640 918 740" fill="none" stroke="#5a5a5a" stroke-width="8" stroke-linejoin="round" /><path d="M442 250 H884 V820 H442 Z" fill="url(#creamh)" stroke="#0a0a0a" stroke-width="7" stroke-linejoin="round" /><path d="M442 226 H884 V250 H442 Z M442 820 H884 V843 H442 Z" fill="#ece9dd" stroke="none" stroke-width="0" stroke-linejoin="round" /><path d="M442 250 H470 M856 250 H884 M442 820 H470 M856 820 H884" fill="none" stroke="#0a0a0a" stroke-width="7" stroke-linejoin="round" /><path d="M470 226 C474 330 476 398 492 423 C502 442 522 449 545 452 H820 C842 449 855 438 861 419 C871 380 871 330 875 226 Z" fill="#ece9dd" stroke="#0a0a0a" stroke-width="9" stroke-linejoin="round" /><path d="M470 843 C474 720 476 662 492 637 C502 618 522 610 545 607 H820 C842 610 855 621 861 640 C871 680 871 720 875 843 Z" fill="#ece9dd" stroke="#0a0a0a" stroke-width="9" stroke-linejoin="round" /><rect x="395" y="480" width="530" height="105" rx="0" fill="url(#silverv)" stroke="#0a0a0a" stroke-width="8" /><rect x="395" y="195" width="530" height="32" rx="0" fill="#0c0c0c" stroke="#0a0a0a" stroke-width="5" /><rect x="395" y="146" width="530" height="50" rx="0" fill="url(#silverv2)" stroke="#0a0a0a" stroke-width="8" /><rect x="395" y="846" width="522" height="64" rx="0" fill="url(#silverv)" stroke="#0a0a0a" stroke-width="8" /><rect x="420" y="912" width="480" height="18" rx="0" fill="#a8a8a8" stroke="#0a0a0a" stroke-width="6" /><path d="M425 905 c-22 10 -22 50 0 58 M905 905 c22 10 22 50 0 58" fill="none" stroke="#222" stroke-width="6" stroke-linejoin="round" /><path d="M706 410 V250 C706 190 765 190 765 250 V410" fill="none" stroke="#0a0a0a" stroke-width="30" stroke-linejoin="round" /><path d="M706 410 V250 C706 190 765 190 765 250 V410" fill="none" stroke="#2e2e2e" stroke-width="16" stroke-linejoin="round" /><rect x="682" y="600" width="108" height="240" rx="0" fill="#1a1919" stroke="#0a0a0a" stroke-width="8" /><path d="M705 605 V838 M735 605 V838 M765 605 V838" fill="none" stroke="#0e0e0e" stroke-width="8" stroke-linejoin="round" /><path d="M672 430 C672 405 690 400 735 400 C780 400 800 405 800 430 V600 H672 Z" fill="#1c1b1b" stroke="#0a0a0a" stroke-width="8" stroke-linejoin="round" /><path d="M676 440 H796" fill="none" stroke="#0c0c0c" stroke-width="6" stroke-linejoin="round" /><circle cx="735" cy="520" r="62" fill="#121212" stroke="#050505" stroke-width="7"/><rect x="207" y="74" width="54" height="918" rx="10" fill="url(#platev)" stroke="#0a0a0a" stroke-width="9" /><rect x="260" y="68" width="66" height="928" rx="4" fill="url(#platev2)" stroke="#0a0a0a" stroke-width="9" /><rect x="325" y="68" width="52" height="928" rx="6" fill="url(#platev)" stroke="#0a0a0a" stroke-width="9" /><rect x="376" y="70" width="20" height="924" rx="3" fill="#d4d4d4" stroke="#0a0a0a" stroke-width="6" /><path d="M386 80 V985" fill="none" stroke="#fafafa" stroke-width="5" stroke-linejoin="round" /><rect x="925" y="70" width="42" height="924" rx="3" fill="#dedede" stroke="#0a0a0a" stroke-width="6" /><path d="M938 75 V990 M952 75 V990" fill="none" stroke="#3a3a3a" stroke-width="6" stroke-linejoin="round" /><rect x="965" y="68" width="38" height="928" rx="4" fill="url(#platev)" stroke="#0a0a0a" stroke-width="9" /><rect x="1002" y="68" width="50" height="928" rx="4" fill="url(#platev2)" stroke="#0a0a0a" stroke-width="9" /><path d="M1052 68 H1098 C1120 72 1130 90 1132 120 V945 C1130 975 1120 992 1098 996 H1052 Z" fill="url(#platev)" stroke="#0a0a0a" stroke-width="9" stroke-linejoin="round" /><path d="M1132 148 H1158 V172 H1146 V198 H1158 V224 H1132 Z" fill="#a8a8a8" stroke="#0a0a0a" stroke-width="7" stroke-linejoin="round" /><path d="M1132 838 H1158 V862 H1146 V886 H1158 V910 H1132 Z" fill="#a8a8a8" stroke="#0a0a0a" stroke-width="7" stroke-linejoin="round" /></g><g transform="translate(1240 310) scale(0.240674)"><path d="M84 345 H100 V372 H108 V690 H100 V720 H84 Z" fill="#2a2524" stroke="#0a0a0a" stroke-width="7" stroke-linejoin="round" /><path d="M100 425 C112 430 120 440 124 455 V610 C120 628 112 638 100 642 Z" fill="#8a8a8a" stroke="#0a0a0a" stroke-width="6" stroke-linejoin="round" /><rect x="122" y="432" width="60" height="206" rx="0" fill="url(#silverv)" stroke="#0a0a0a" stroke-width="6" /><rect x="180" y="420" width="86" height="226" rx="0" fill="url(#silverv2)" stroke="#0a0a0a" stroke-width="6" /><rect x="238" y="246" width="32" height="574" rx="9" fill="#9c9c9c" stroke="#0a0a0a" stroke-width="7" /><path d="M254 262 V805" fill="none" stroke="#c8c8c8" stroke-width="6" stroke-linejoin="round" /><rect x="240" y="400" width="26" height="110" rx="0" fill="#858585" stroke="#0a0a0a" stroke-width="3" /><rect x="270" y="450" width="30" height="80" rx="0" fill="#5a5a5a" stroke="#0a0a0a" stroke-width="3" /><rect x="282" y="520" width="18" height="62" rx="0" fill="#a0674a" stroke="#0a0a0a" stroke-width="2" /><rect x="270" y="585" width="30" height="40" rx="0" fill="#3a3a3a" stroke="#0a0a0a" stroke-width="3" /><rect x="268" y="152" width="34" height="46" rx="0" fill="#9a9a9a" stroke="#0a0a0a" stroke-width="7" /><rect x="268" y="868" width="34" height="46" rx="0" fill="#9a9a9a" stroke="#0a0a0a" stroke-width="7" /><rect x="300" y="112" width="28" height="840" rx="3" fill="#3a3332" stroke="#0a0a0a" stroke-width="8" /><path d="M328 350 H350 L374 400 V440 L408 466 V610 L374 626 L350 666 H328 Z" fill="#1a1919" stroke="#0a0a0a" stroke-width="7" stroke-linejoin="round" /><path d="M350 352 L362 505 L350 664" fill="none" stroke="#2e2d2d" stroke-width="7" stroke-linejoin="round" /><rect x="333" y="48" width="406" height="252" rx="112" fill="url(#knob2g)" stroke="#080808" stroke-width="8"/><path d="M352 138 C380 78 430 68 560 68 C640 68 690 84 716 132" fill="none" stroke="#7a7a7a" stroke-width="8" opacity="0.7"/><path d="M700 78 C728 104 738 144 736 178" fill="none" stroke="#1c1c1c" stroke-width="9"/><rect x="421" y="155" width="28" height="116" fill="#6e6e6e" stroke="#080808" stroke-width="6"/><rect x="470" y="155" width="28" height="116" fill="#6e6e6e" stroke="#080808" stroke-width="6"/><rect x="519" y="155" width="28" height="116" fill="#6e6e6e" stroke="#080808" stroke-width="6"/><rect x="568" y="155" width="28" height="116" fill="#6e6e6e" stroke="#080808" stroke-width="6"/><rect x="618" y="155" width="28" height="116" fill="#6e6e6e" stroke="#080808" stroke-width="6"/><rect x="333" y="764" width="406" height="252" rx="112" fill="url(#knob2g)" stroke="#080808" stroke-width="8"/><path d="M352 854 C380 794 430 784 560 784 C640 784 690 800 716 848" fill="none" stroke="#7a7a7a" stroke-width="8" opacity="0.7"/><path d="M700 794 C728 820 738 860 736 894" fill="none" stroke="#1c1c1c" stroke-width="9"/><rect x="421" y="871" width="28" height="116" fill="#6e6e6e" stroke="#080808" stroke-width="6"/><rect x="470" y="871" width="28" height="116" fill="#6e6e6e" stroke="#080808" stroke-width="6"/><rect x="519" y="871" width="28" height="116" fill="#6e6e6e" stroke="#080808" stroke-width="6"/><rect x="568" y="871" width="28" height="116" fill="#6e6e6e" stroke="#080808" stroke-width="6"/><rect x="618" y="871" width="28" height="116" fill="#6e6e6e" stroke="#080808" stroke-width="6"/></g><defs><linearGradient id="rodg" x1="0" y1="0" x2="0" y2="1"><stop offset="0" stop-color="#8a8a8a"/><stop offset="0.3" stop-color="#ffffff"/><stop offset="0.6" stop-color="#cfcfcf"/><stop offset="1" stop-color="#3c3c3c"/></linearGradient><linearGradient id="faceg" x1="0.5" y1="1" x2="0.5" y2="0"><stop offset="0" stop-color="#7c7c7c"/><stop offset="0.6" stop-color="#868686"/><stop offset="1" stop-color="#8e8e8e"/></linearGradient><linearGradient id="recg" x1="0.5" y1="1" x2="0.5" y2="0"><stop offset="0" stop-color="#4e4e4e"/><stop offset="0.45" stop-color="#6a6a6a"/><stop offset="0.68" stop-color="#a0a0a0"/><stop offset="0.84" stop-color="#f4f4f4"/><stop offset="0.94" stop-color="#b0b0b0"/><stop offset="1" stop-color="#8a8a8a"/></linearGradient><linearGradient id="olive" x1="0" y1="0" x2="1" y2="1"><stop offset="0" stop-color="#676349"/><stop offset="0.6" stop-color="#7f7b5f"/><stop offset="1" stop-color="#979374"/></linearGradient><linearGradient id="hk" x1="0" y1="0" x2="0" y2="1"><stop offset="0" stop-color="#707070"/><stop offset="0.1" stop-color="#a2a2a2"/><stop offset="0.3" stop-color="#8a8a8a"/><stop offset="0.68" stop-color="#727272"/><stop offset="0.77" stop-color="#3e3e3e"/><stop offset="0.85" stop-color="#121212"/><stop offset="1" stop-color="#0a0a0a"/></linearGradient></defs><g transform="translate(655 635) scale(0.25)"><ellipse cx="317.0" cy="399.0" rx="205.0" ry="385.0" transform="rotate(29.5 317.0 399.0)" fill="#2b2625" stroke="#070707" stroke-width="7" /><ellipse cx="324.3" cy="403.1" rx="205.0" ry="385.0" transform="rotate(29.5 324.3 403.1)" fill="#3a3231" stroke="#070707" stroke-width="0" /><ellipse cx="330.5" cy="406.7" rx="205.0" ry="385.0" transform="rotate(29.5 330.5 406.7)" fill="#4a403e" stroke="#070707" stroke-width="0" /><ellipse cx="336.8" cy="410.2" rx="205.0" ry="385.0" transform="rotate(29.5 336.8 410.2)" fill="#342d2c" stroke="#070707" stroke-width="0" /><ellipse cx="343.0" cy="413.8" rx="205.0" ry="385.0" transform="rotate(29.5 343.0 413.8)" fill="#231f1e" stroke="#070707" stroke-width="0" /><ellipse cx="348.2" cy="416.7" rx="205.0" ry="385.0" transform="rotate(29.5 348.2 416.7)" fill="#080707" stroke="#070707" stroke-width="0" /><ellipse cx="354.4" cy="420.2" rx="205.0" ry="385.0" transform="rotate(29.5 354.4 420.2)" fill="#2b2625" stroke="#070707" stroke-width="0" /><ellipse cx="360.7" cy="423.8" rx="205.0" ry="385.0" transform="rotate(29.5 360.7 423.8)" fill="#3a3231" stroke="#070707" stroke-width="0" /><ellipse cx="365.9" cy="426.7" rx="205.0" ry="385.0" transform="rotate(29.5 365.9 426.7)" fill="#4a403e" stroke="#070707" stroke-width="0" /><ellipse cx="371.1" cy="429.7" rx="205.0" ry="385.0" transform="rotate(29.5 371.1 429.7)" fill="#342d2c" stroke="#070707" stroke-width="0" /><ellipse cx="377.3" cy="433.2" rx="205.0" ry="385.0" transform="rotate(29.5 377.3 433.2)" fill="#231f1e" stroke="#070707" stroke-width="0" /><ellipse cx="382.5" cy="436.2" rx="205.0" ry="385.0" transform="rotate(29.5 382.5 436.2)" fill="#080707" stroke="#070707" stroke-width="0" /><ellipse cx="388.8" cy="439.7" rx="205.0" ry="385.0" transform="rotate(29.5 388.8 439.7)" fill="#2b2625" stroke="#070707" stroke-width="0" /><ellipse cx="394.0" cy="442.7" rx="205.0" ry="385.0" transform="rotate(29.5 394.0 442.7)" fill="#3f3635" stroke="#070707" stroke-width="0" /><ellipse cx="400.2" cy="446.2" rx="205.0" ry="385.0" transform="rotate(29.5 400.2 446.2)" fill="#4a403e" stroke="#070707" stroke-width="0" /><ellipse cx="405.4" cy="449.1" rx="205.0" ry="385.0" transform="rotate(29.5 405.4 449.1)" fill="#2d2726" stroke="#070707" stroke-width="0" /><ellipse cx="410.6" cy="452.1" rx="205.0" ry="385.0" transform="rotate(29.5 410.6 452.1)" fill="#0a0909" stroke="#070707" stroke-width="0" /><ellipse cx="414.8" cy="454.5" rx="205.0" ry="385.0" transform="rotate(29.5 414.8 454.5)" fill="#e4e4e4" stroke="#070707" stroke-width="0" /><ellipse cx="417.9" cy="456.2" rx="205.0" ry="385.0" transform="rotate(29.5 417.9 456.2)" fill="#151414" stroke="#070707" stroke-width="0" /><ellipse cx="421.0" cy="458.0" rx="205.0" ry="385.0" transform="rotate(29.5 421.0 458.0)" fill="#8a8a8a" stroke="#111" stroke-width="3" /><ellipse cx="421.0" cy="458.0" rx="201.9" ry="379.2" transform="rotate(29.5 421.0 458.0)" fill="url(#faceg)" stroke="#070707" stroke-width="0" /><ellipse cx="435.0" cy="466.0" rx="155.8" ry="292.6" transform="rotate(29.5 435.0 466.0)" fill="url(#recg)" stroke="#0a0a0a" stroke-width="7" /><ellipse cx="451.0" cy="475.0" rx="127.1" ry="238.7" transform="rotate(29.5 451.0 475.0)" fill="#5e5e5e" stroke="#111" stroke-width="4" /><ellipse cx="461.0" cy="480.0" rx="118.9" ry="223.3" transform="rotate(29.5 461.0 480.0)" fill="url(#olive)" stroke="#2a2818" stroke-width="4" /><ellipse cx="461.0" cy="480.0" rx="112.8" ry="211.8" transform="rotate(29.5 461.0 480.0)" fill="none" stroke="#c8c39a" stroke-width="3" /><path d="M470 470 C500 455 520 470 545 500 L520 560 C500 540 480 520 465 525 Z" fill="#b5b08a" stroke="#3a3826" stroke-width="3"/><path d="M285 945 L335 900 L470 905 L545 950 L385 1000 Z" fill="#f6f6f6" stroke="#0a0a0a" stroke-width="6" stroke-linejoin="round"/><path d="M385 1000 L545 950 L545 962 L388 1008 Z" fill="#9a9a9a" stroke="#0a0a0a" stroke-width="4"/><g transform="translate(650 350) rotate(28.6)"><rect x="0" y="-17.0" width="125" height="34" fill="url(#rodg)" stroke="#0a0a0a" stroke-width="7"/></g><g transform="translate(300 287) rotate(28.3)"><rect x="0" y="-25.0" width="386" height="50" fill="url(#rodg)" stroke="#0a0a0a" stroke-width="7"/><ellipse cx="0" cy="0" rx="14" ry="25.0" fill="#e4e4e4" stroke="#0a0a0a" stroke-width="6"/></g><g transform="translate(305 752) rotate(28.3)"><rect x="0" y="-23.0" width="244" height="46" fill="url(#rodg)" stroke="#0a0a0a" stroke-width="7"/><ellipse cx="0" cy="0" rx="13" ry="23.0" fill="#e4e4e4" stroke="#0a0a0a" stroke-width="6"/></g><path d="M408 600 C400 520 420 450 470 425 M440 612 C440 540 455 480 492 440" fill="none" stroke="#111" stroke-width="12" stroke-linecap="round"/><path d="M424 606 C420 530 438 465 480 432" fill="none" stroke="#5a5a5a" stroke-width="5"/><g transform="translate(205 560) rotate(26.9)"><rect x="0" y="-32.0" width="398" height="64" fill="url(#rodg)" stroke="#0a0a0a" stroke-width="7"/><ellipse cx="0" cy="0" rx="18" ry="32.0" fill="#e4e4e4" stroke="#0a0a0a" stroke-width="6"/></g><path d="M352 730 L440 760 L436 900 C420 920 370 915 352 890 Z" fill="#161515" stroke="#050505" stroke-width="5"/><path d="M380 742 V905 M410 752 V912" stroke="#2c2b2b" stroke-width="5" fill="none"/><path d="M378 600 C378 580 470 585 468 612 L462 660 L380 650 Z" fill="#1c1b1b" stroke="#050505" stroke-width="5"/><ellipse cx="424" cy="600" rx="45" ry="16" transform="rotate(8 424 600)" fill="#2a2929" stroke="#050505" stroke-width="4"/><path d="M340 690 C335 640 380 615 430 640 C470 660 470 720 440 750 C400 775 345 745 340 690 Z" fill="#141313" stroke="#050505" stroke-width="5"/><ellipse cx="380" cy="695" rx="40" ry="52" transform="rotate(-20 380 695)" fill="#0e0e0e" stroke="#2a2a2a" stroke-width="4"/><ellipse cx="732.0" cy="634.0" rx="205.0" ry="385.0" transform="rotate(29.5 732.0 634.0)" fill="#2b2625" stroke="#070707" stroke-width="7" /><ellipse cx="739.3" cy="638.1" rx="205.0" ry="385.0" transform="rotate(29.5 739.3 638.1)" fill="#3a3231" stroke="#070707" stroke-width="0" /><ellipse cx="745.5" cy="641.7" rx="205.0" ry="385.0" transform="rotate(29.5 745.5 641.7)" fill="#4a403e" stroke="#070707" stroke-width="0" /><ellipse cx="751.8" cy="645.2" rx="205.0" ry="385.0" transform="rotate(29.5 751.8 645.2)" fill="#342d2c" stroke="#070707" stroke-width="0" /><ellipse cx="758.0" cy="648.8" rx="205.0" ry="385.0" transform="rotate(29.5 758.0 648.8)" fill="#231f1e" stroke="#070707" stroke-width="0" /><ellipse cx="763.2" cy="651.7" rx="205.0" ry="385.0" transform="rotate(29.5 763.2 651.7)" fill="#080707" stroke="#070707" stroke-width="0" /><ellipse cx="769.4" cy="655.2" rx="205.0" ry="385.0" transform="rotate(29.5 769.4 655.2)" fill="#2b2625" stroke="#070707" stroke-width="0" /><ellipse cx="775.7" cy="658.8" rx="205.0" ry="385.0" transform="rotate(29.5 775.7 658.8)" fill="#3a3231" stroke="#070707" stroke-width="0" /><ellipse cx="780.9" cy="661.7" rx="205.0" ry="385.0" transform="rotate(29.5 780.9 661.7)" fill="#4a403e" stroke="#070707" stroke-width="0" /><ellipse cx="786.1" cy="664.7" rx="205.0" ry="385.0" transform="rotate(29.5 786.1 664.7)" fill="#342d2c" stroke="#070707" stroke-width="0" /><ellipse cx="792.3" cy="668.2" rx="205.0" ry="385.0" transform="rotate(29.5 792.3 668.2)" fill="#231f1e" stroke="#070707" stroke-width="0" /><ellipse cx="797.5" cy="671.2" rx="205.0" ry="385.0" transform="rotate(29.5 797.5 671.2)" fill="#080707" stroke="#070707" stroke-width="0" /><ellipse cx="803.8" cy="674.7" rx="205.0" ry="385.0" transform="rotate(29.5 803.8 674.7)" fill="#2b2625" stroke="#070707" stroke-width="0" /><ellipse cx="809.0" cy="677.7" rx="205.0" ry="385.0" transform="rotate(29.5 809.0 677.7)" fill="#3f3635" stroke="#070707" stroke-width="0" /><ellipse cx="815.2" cy="681.2" rx="205.0" ry="385.0" transform="rotate(29.5 815.2 681.2)" fill="#4a403e" stroke="#070707" stroke-width="0" /><ellipse cx="820.4" cy="684.1" rx="205.0" ry="385.0" transform="rotate(29.5 820.4 684.1)" fill="#2d2726" stroke="#070707" stroke-width="0" /><ellipse cx="825.6" cy="687.1" rx="205.0" ry="385.0" transform="rotate(29.5 825.6 687.1)" fill="#0a0909" stroke="#070707" stroke-width="0" /><ellipse cx="829.8" cy="689.5" rx="205.0" ry="385.0" transform="rotate(29.5 829.8 689.5)" fill="#3a3231" stroke="#070707" stroke-width="0" /><ellipse cx="832.9" cy="691.2" rx="205.0" ry="385.0" transform="rotate(29.5 832.9 691.2)" fill="#151414" stroke="#070707" stroke-width="0" /><ellipse cx="836.0" cy="693.0" rx="205.0" ry="385.0" transform="rotate(29.5 836.0 693.0)" fill="#2b2625" stroke="#111" stroke-width="3" /><ellipse cx="836.0" cy="693.0" rx="194.8" ry="365.8" transform="rotate(29.5 836.0 693.0)" fill="#2e2827" stroke="#4a4241" stroke-width="3" /><ellipse cx="842.0" cy="696.0" rx="164.0" ry="308.0" transform="rotate(29.5 842.0 696.0)" fill="#2a2524" stroke="#0d0c0c" stroke-width="4" /><ellipse cx="842.0" cy="696.0" rx="155.8" ry="292.6" transform="rotate(29.5 842.0 696.0)" fill="none" stroke="#48403f" stroke-width="3" /><path d="M690 640 C730 590 830 560 900 570 C960 575 1010 610 1030 660" fill="none" stroke="#5a514f" stroke-width="5" stroke-dasharray="6 4"/><path d="M700 655 C740 610 830 580 900 588" fill="none" stroke="#1a1716" stroke-width="4"/><ellipse cx="730" cy="532" rx="20" ry="26" transform="rotate(29.5 730 532)" fill="#2a2a2a" stroke="#060606" stroke-width="6"/><ellipse cx="738" cy="536" rx="16" ry="23" transform="rotate(29.5 738 536)" fill="#6a6a6a" stroke="#060606" stroke-width="4"/><path d="M726 518 C736 512 748 518 752 528" stroke="#f0f0f0" stroke-width="6" fill="none" stroke-linecap="round"/><path d="M728 552 L752 524" stroke="#111" stroke-width="5"/><ellipse cx="1076" cy="604" rx="20" ry="26" transform="rotate(29.5 1076 604)" fill="#2a2a2a" stroke="#060606" stroke-width="6"/><ellipse cx="1084" cy="608" rx="16" ry="23" transform="rotate(29.5 1084 608)" fill="#6a6a6a" stroke="#060606" stroke-width="4"/><path d="M1072 590 C1082 584 1094 590 1098 600" stroke="#f0f0f0" stroke-width="6" fill="none" stroke-linecap="round"/><path d="M1074 624 L1098 596" stroke="#111" stroke-width="5"/><ellipse cx="733" cy="990" rx="20" ry="26" transform="rotate(29.5 733 990)" fill="#2a2a2a" stroke="#060606" stroke-width="6"/><ellipse cx="741" cy="994" rx="16" ry="23" transform="rotate(29.5 741 994)" fill="#6a6a6a" stroke="#060606" stroke-width="4"/><path d="M729 976 C739 970 751 976 755 986" stroke="#f0f0f0" stroke-width="6" fill="none" stroke-linecap="round"/><path d="M731 1010 L755 982" stroke="#111" stroke-width="5"/><ellipse cx="838" cy="518" rx="20" ry="34" transform="rotate(29.5 838 518)" fill="#0c0b0b" stroke="#050505" stroke-width="4"/><ellipse cx="842" cy="520" rx="8" ry="14" transform="rotate(29.5 842 520)" fill="none" stroke="#7a4526" stroke-width="3"/><path d="M850 760 L900 598" stroke="#0a0a0a" stroke-width="30" stroke-linecap="round" fill="none"/><circle cx="900" cy="598" r="27" fill="#0a0a0a"/><path d="M850 760 L900 598" stroke="#a6a6a6" stroke-width="20" stroke-linecap="round" fill="none"/><circle cx="900" cy="598" r="22" fill="#b0b0b0"/><path d="M850 760 L900 598" stroke="#e0e0e0" stroke-width="4" stroke-linecap="round" fill="none"/><path d="M760 850 L655 855" stroke="#0a0a0a" stroke-width="28" stroke-linecap="round" fill="none"/><circle cx="655" cy="855" r="25" fill="#0a0a0a"/><path d="M760 850 L655 855" stroke="#a6a6a6" stroke-width="18" stroke-linecap="round" fill="none"/><circle cx="655" cy="855" r="20" fill="#b0b0b0"/><path d="M760 850 L655 855" stroke="#e0e0e0" stroke-width="4" stroke-linecap="round" fill="none"/><path d="M800 930 L765 1085" stroke="#0a0a0a" stroke-width="30" stroke-linecap="round" fill="none"/><circle cx="765" cy="1085" r="27" fill="#0a0a0a"/><path d="M800 930 L765 1085" stroke="#a6a6a6" stroke-width="20" stroke-linecap="round" fill="none"/><circle cx="765" cy="1085" r="22" fill="#b0b0b0"/><path d="M800 930 L765 1085" stroke="#e0e0e0" stroke-width="4" stroke-linecap="round" fill="none"/><path d="M880 720 C870 670 900 630 950 620 L1020 660 L985 790 Z" fill="#1a1919" stroke="#050505" stroke-width="4"/><path d="M905 640 C930 610 975 615 1010 640 L1000 690 L900 700 Z" fill="#d8d8d8" stroke="#0a0a0a" stroke-width="4"/><ellipse cx="977" cy="735" rx="44" ry="62" transform="rotate(29.5 977 735)" fill="#bdbdbd" stroke="#060606" stroke-width="6"/><path d="M960 705 L990 712 L1000 760 L975 775 L955 745 Z" fill="#2a2a2a"/><path d="M972 720 L985 724 L990 750 L975 758 L966 742 Z" fill="#9a9a9a"/><path d="M968 708 L990 714 L994 730" fill="none" stroke="#2f7fd6" stroke-width="5"/><path d="M990 790 L1020 812" stroke="#0a0a0a" stroke-width="26" stroke-linecap="round" fill="none"/><circle cx="1020" cy="812" r="24" fill="#0a0a0a"/><path d="M990 790 L1020 812" stroke="#a6a6a6" stroke-width="16" stroke-linecap="round" fill="none"/><circle cx="1020" cy="812" r="19" fill="#b0b0b0"/><path d="M990 790 L1020 812" stroke="#e0e0e0" stroke-width="4" stroke-linecap="round" fill="none"/><path d="M640 720 L974 832 L1140 946 L1100 1020 L1047 998 L902 967 L776 904 L632 790 Z" fill="#232121" stroke="#050505" stroke-width="7" stroke-linejoin="round"/><ellipse cx="870" cy="915" rx="62" ry="48" transform="rotate(20 870 915)" fill="#121111" stroke="#050505" stroke-width="4"/><g transform="translate(632 700) rotate(28.7)"><rect x="0" y="-50" width="384" height="100" rx="26" fill="url(#hk)" stroke="#060606" stroke-width="8"/><path d="M262 -50 H358 a26 26 0 0 1 26 26 V24 a26 26 0 0 1 -26 26 H262 Z" fill="#555555" stroke="#060606" stroke-width="5"/><path d="M262 26 H384 a26 26 0 0 1 -26 24 H262 Z" fill="#1a1a1a"/><path d="M24 -30 H250" stroke="#a2a2a2" stroke-width="9" opacity="0.55"/><path d="M318 -28 C350 -34 372 -16 366 6 C360 26 336 30 322 18 C308 6 306 -22 318 -28 Z" fill="#222" stroke="#0a0a0a" stroke-width="4"/><path d="M326 -14 L356 -8 M328 6 L352 8 M340 -24 L338 20" stroke="#8a8a8a" stroke-width="4" fill="none"/></g><g transform="translate(1091.6 1009.6) rotate(30.6)"><path d="M14 -45 L362 -58 V60 L14 45 a14 14 0 0 1 -14 -14 V-31 a14 14 0 0 1 14 -14 Z" fill="url(#hk)" stroke="#060606" stroke-width="8" stroke-linejoin="round"/><path d="M236 -53 L350 -58 a14 14 0 0 1 14 14 V46 a14 14 0 0 1 -14 14 L236 55 Z" fill="#555555" stroke="#060606" stroke-width="5"/><path d="M236 34 H364 V46 a14 14 0 0 1 -14 14 L236 55 Z" fill="#181818"/><path d="M24 -27 H226" stroke="#a2a2a2" stroke-width="9" opacity="0.55"/><path d="M300 -26 C334 -34 356 -14 350 10 C344 32 318 36 304 22 C290 8 288 -20 300 -26 Z" fill="#222" stroke="#0a0a0a" stroke-width="4"/><path d="M308 -12 L340 -6 M310 10 L336 12 M324 -22 L322 24" stroke="#8a8a8a" stroke-width="4" fill="none"/></g></g></svg>
<svg class="b" style="left:0px;top:0px;" width="1920" height="1080" viewBox="0 0 1920 1080"><path d="M2.2 6 H23.8 V23.8 H2.2 Z" fill="#6b4e00" stroke="none" stroke-width="1" /><path d="M0 4 L4 2.2 V20 L0 22 Z" fill="#f5c277" stroke="none" stroke-width="1" /><rect x="4" y="2.2" width="18" height="17.8" fill="#dfa70c" stroke="none" stroke-width="1" rx="0" /><text x="13.2" y="15.7" font-size="14.6" font-weight="bold" fill="#fff" text-anchor="middle" style="font-family:'Liberation Serif',serif">I</text><path d="M33.6 5.5 H44.5 L48.4 9.5 V16.4 H33.6 Z" fill="#f2f2f2" stroke="#555555" stroke-width="1.2" /><path d="M44.5 5.5 L48.4 9.5 H44.5 Z" fill="#666" stroke="none" stroke-width="1" /><path d="M56 10 H61 L58.5 13 Z" fill="#555" stroke="none" stroke-width="1" /><path d="M69.6 16.4 V4.6 H75.2 L76.6 6.6 H82.4 V9.4" fill="#f0f0f0" stroke="#555555" stroke-width="1.2" /><path d="M69.6 16.4 L72.8 9.6 H84.4 L81.2 16.4 Z" fill="#f2f2f2" stroke="#555555" stroke-width="1.2" /><rect x="94.6" y="4.6" width="13" height="13" fill="#6e6e6e" stroke="#555555" stroke-width="1" rx="0" /><rect x="98.4" y="4.6" width="7.2" height="4.2" fill="#f0f0f0" stroke="none" stroke-width="1" rx="0" /><rect x="97.8" y="12.8" width="6.6" height="4.6" fill="#f0f0f0" stroke="none" stroke-width="1" rx="0" /><rect x="98.8" y="13.8" width="1.2" height="2.4" fill="#444" stroke="none" stroke-width="1" rx="0" /><path d="M94.6 15 L96.8 17.6 H94.6 Z" fill="#ddd" stroke="none" stroke-width="1" /><path d="M117.2 10.4 L124.6 6.2 V8.6 C129.5 8.6 132.6 10.4 132.6 15 C131 12.6 128.6 12.4 124.6 12.4 V15.4 Z" fill="#f4f4f4" stroke="#555555" stroke-width="1.2" stroke-linejoin="round"/><path d="M140 9 H145.2 L142.6 12 Z" fill="#555" stroke="none" stroke-width="1" /><path d="M168.6 10.4 L161.2 6.2 V8.6 C156.3 8.6 153.2 10.4 153.2 15 C154.8 12.6 157.2 12.4 161.2 12.4 V15.4 Z" fill="#e9e9e9" stroke="#b9bcc0" stroke-width="1.1" stroke-linejoin="round"/><path d="M176.2 9 H181 L178.6 12 Z" fill="#8a8a8a" stroke="none" stroke-width="1" /><path d="M189.8 11.6 L197 4.4 L204.2 11.6" fill="none" stroke="#555555" stroke-width="1.5" /><path d="M191.6 10.6 L197 5.4 L202.6 10.6 V18.2 H191.6 Z" fill="#fff" stroke="#555555" stroke-width="1.2" /><rect x="200.2" y="5" width="1.8" height="3.4" fill="#555555" stroke="none" stroke-width="1" rx="0" /><rect x="196" y="13.4" width="2.4" height="4.6" fill="#555555" stroke="none" stroke-width="1" rx="0" /><path d="M214.6 5 V10 M226.4 5 V10 M214.6 7.5 H226.4" fill="none" stroke="#555555" stroke-width="1.2" /><rect x="214" y="11" width="13" height="4" fill="#f0a30a" stroke="none" stroke-width="1" rx="0" /><path d="M215.5 11 V13 M217.5 11 V13 M219.5 11 V13 M221.5 11 V13 M223.5 11 V13 M225.5 11 V13" fill="none" stroke="#7a5a10" stroke-width="0.8" /><rect x="240.6" y="3.4" width="8.8" height="5" fill="#fafafa" stroke="#555555" stroke-width="1.2" rx="0" /><rect x="237.6" y="6.8" width="14.8" height="8.6" fill="#fff" stroke="#555555" stroke-width="1.2" rx="0" /><rect x="238.2" y="11.2" width="13.6" height="2" fill="#8a8a8a" stroke="none" stroke-width="1" rx="0" /><rect x="240.6" y="13.4" width="8.8" height="4.8" fill="#fff" stroke="#555555" stroke-width="1.2" rx="0" /><rect x="242" y="14.2" width="6" height="2.6" fill="#4a9de0" stroke="none" stroke-width="1" rx="0" /><circle cx="272.2" cy="11" r="3.7" fill="#b9bec4" stroke="#adb0b4" stroke-width="0.6" /><path d="M262.2 11 L266.4 8 V14 Z" fill="#b0b4b9" stroke="none" stroke-width="1" /><path d="M266 11 H269" fill="none" stroke="#b0b4b9" stroke-width="1.2" /><path d="M284 10 H289 L286.5 13 Z" fill="#555" stroke="none" stroke-width="1" /><rect x="303.6" y="8.4" width="8.6" height="6.8" fill="#e8e8e6" stroke="#9a9a9a" stroke-width="1" rx="1.5" /><rect x="300.6" y="15.2" width="8.8" height="3" fill="#e8e8e6" stroke="#9a9a9a" stroke-width="1" rx="0" /><path d="M299.6 3 H305.6 L302.8 9.2 H305.2 L297 18 L300 10.8 H297.6 Z" fill="#aeb1b4" stroke="none" stroke-width="1" /><path d="M327.6 11.6 H334 L336.6 14 V18.2 H327.6 Z" fill="#e8e8e6" stroke="#9a9a9a" stroke-width="1" /><path d="M323.4 3 H329.6 L326.8 9.2 H329.2 L321 18 L324 10.8 H321.6 Z" fill="#aeb1b4" stroke="none" stroke-width="1" /><path d="M345.4 7.4 L348.6 3.4 H359.8 L356 7.4 Z" fill="#fff" stroke="#555555" stroke-width="1" /><path d="M356 7.4 L359.8 3.4 V14 L356 17.6 Z" fill="#dcdcdc" stroke="#555555" stroke-width="1" /><rect x="345" y="7.4" width="11" height="10.4" fill="#55b57e" stroke="none" stroke-width="1" rx="0" /><path d="M355.4 9.4 V17 L357.2 15.4 L358.4 18.2 L359.4 17.8 L358.2 15 L360.4 14.8 Z" fill="#fff" stroke="#222" stroke-width="0.8" /><path d="M366.2 10 H371.2 L368.7 13 Z" fill="#555" stroke="none" stroke-width="1" /><path d="M382 9.2 H386 V5.2 H390 V9.2 H394 V13 H390 V17 H386 V13 H382 Z" fill="#b3b5b8" stroke="#a8aaad" stroke-width="0.6" /><rect x="406.2" y="3.2" width="11.6" height="14.6" fill="#5a5a5a" stroke="none" stroke-width="1" rx="0" /><path d="M408 5.6 H416 M408 7.8 H416 M408 10 H416 M408 12.2 H416" fill="none" stroke="#9a9a9a" stroke-width="1" /><path d="M410 17.6 C411.5 15 413 15.4 414.4 16.6 C415.8 17.8 417.4 17 418.8 15.2" fill="none" stroke="#f0a30a" stroke-width="2.2" /><rect x="428" y="7" width="8.2" height="1.2" fill="#555" stroke="none" stroke-width="1" rx="0" /><path d="M428 10.4 H436.2 L432.1 14.2 Z" fill="#555" stroke="none" stroke-width="1" /><rect x="783.4" y="34.6" width="14.4" height="7.6" fill="#f5f5f5" stroke="#222" stroke-width="1.2" rx="2.2" /><path d="M788 40 L790.6 37 L793.2 40 Z" fill="#222" stroke="none" stroke-width="1" /><path d="M802.4 37.6 H806.8 L804.5999999999999 40.2 Z" fill="#222" stroke="none" stroke-width="1" /><path d="M125.6 131.2 H133.6 L129.6 135 Z" fill="#444" stroke="none" stroke-width="1" /><path d="M1245.8 131.2 H1253.8 L1249.8 135 Z" fill="#444" stroke="none" stroke-width="1" /><path d="M1425 7.6 L1429 11.2 L1425 14.8 Z" fill="#666" stroke="none" stroke-width="1" /><path d="M1618.6 18.4 C1618.6 14.6 1622 14 1623.6 12.6 C1621.6 10.8 1621.4 4 1626 4 C1630.6 4 1630.4 10.8 1628.4 12.6 C1630 14 1633.4 14.6 1633.4 18.4 Z" fill="#5b8fd6" stroke="#1f2f5f" stroke-width="1.1" /><path d="M1724 10 H1729.2 L1726.6 12.8 Z" fill="#777" stroke="none" stroke-width="1" /><path d="M1740.4 5 H1743 L1745.6 13.6 H1753.4 L1755.4 7.4 H1744" fill="#fff" stroke="#1a2a6c" stroke-width="1.3" stroke-linejoin="round"/><circle cx="1746.6" cy="16.2" r="1.4" fill="#fff" stroke="#1a2a6c" stroke-width="1.1" /><circle cx="1752.4" cy="16.2" r="1.4" fill="#fff" stroke="#1a2a6c" stroke-width="1.1" /><rect x="1765" y="2" width="1" height="18" fill="#c6c6c6" stroke="none" stroke-width="1" rx="0" /><circle cx="1783" cy="11" r="7.6" fill="#fff" stroke="#222" stroke-width="1.3" /><text x="1783" y="15.4" font-size="12.5" font-weight="bold" fill="#1c4fa0" text-anchor="middle">?</text><path d="M1798.4 10 H1803 L1800.7 12.6 Z" fill="#888" stroke="none" stroke-width="1" /><rect x="1854" y="15.6" width="8" height="2.2" fill="#333" stroke="none" stroke-width="1" rx="0" /><path d="M1879.8 10 V7.4 H1888.6 V14 H1886" fill="none" stroke="#333" stroke-width="1.5" /><rect x="1877.2" y="10.4" width="8.6" height="7" fill="none" stroke="#333" stroke-width="1.5" rx="0" /><path d="M1902.4 6.6 L1912.8 17 M1912.8 6.6 L1902.4 17" fill="none" stroke="#333" stroke-width="1.9" /><rect x="11" y="55" width="11.6" height="14.6" fill="#5f5f5f" stroke="none" stroke-width="1" rx="0" /><path d="M12.6 58.8 H21 M12.6 61.3 H21 M12.6 63.8 H21" fill="none" stroke="#a0a0a0" stroke-width="1.2" /><path d="M15.0 69.6 C17.2 66.2 18.6 67.8 19.9 68.9 C21.3 70.0 22.6 69.0 24.0 66.8" fill="none" stroke="#eda41c" stroke-width="2.4" /><path d="M12 80.4 H22.6 V82 H21 L22.8 92 C22.8 93.6 21.6 94 20.6 94 H12.6 C11 94 11 91 12.6 91 H14.4 L12.6 82 C11 82 11 80.4 12 80.4 Z" fill="#5f5f5f" stroke="none" stroke-width="1" /><path d="M14.8 84 H20 M15.2 86.2 H20.6 M15.6 88.4 H21 M16 90.6 H21.4" fill="none" stroke="#f0f0f0" stroke-width="1.1" /><rect x="155.5" y="64" width="22.2" height="21.7" fill="#e8a621" stroke="none" stroke-width="1" rx="1.2" /><rect x="151.6" y="53.6" width="24.2" height="23.6" fill="#f5f5f5" stroke="none" stroke-width="1" rx="1.5" /><rect x="152.1" y="54" width="23.4" height="22.9" fill="#1d4278" stroke="none" stroke-width="1" rx="1.2" /><path d="M156 59.6 L161.8 56.9 V71.2 L156 73.8 Z" fill="#fff" stroke="none" stroke-width="1" /><path d="M166.2 59.6 L171.2 56.9 V71.2 L166.2 73.8 Z" fill="#fff" stroke="none" stroke-width="1" /><path d="M156 64.2 C158 62.6 160 61.6 162 62.6 C164 63.8 166 65.4 168 64.2 C169.4 63.4 170.4 62.6 171.2 62 V67.8 C169.4 69.2 167.4 70.2 165.4 69 C163.4 67.8 161.4 66.6 159.4 67.8 C158 68.6 157 69.4 156 70.2 Z" fill="#eda41c" stroke="none" stroke-width="1" /><text x="165.4" y="84.2" font-size="7.6" font-weight="bold" fill="#fff" text-anchor="middle" letter-spacing="0.4">T4I</text><rect x="210" y="55" width="16" height="16" fill="#fff" stroke="none" stroke-width="1" rx="0" /><rect x="210" y="55" width="7" height="7" fill="#000" stroke="none" stroke-width="1" rx="0" /><rect x="211" y="56" width="5" height="5" fill="#fff" stroke="none" stroke-width="1" rx="0" /><rect x="212.2" y="57.2" width="2.6" height="2.6" fill="#000" stroke="none" stroke-width="1" rx="0" /><rect x="219" y="55" width="7" height="7" fill="#000" stroke="none" stroke-width="1" rx="0" /><rect x="220" y="56" width="5" height="5" fill="#fff" stroke="none" stroke-width="1" rx="0" /><rect x="221.2" y="57.2" width="2.6" height="2.6" fill="#000" stroke="none" stroke-width="1" rx="0" /><rect x="210" y="64" width="7" height="7" fill="#000" stroke="none" stroke-width="1" rx="0" /><rect x="211" y="65" width="5" height="5" fill="#fff" stroke="none" stroke-width="1" rx="0" /><rect x="212.2" y="66.2" width="2.6" height="2.6" fill="#000" stroke="none" stroke-width="1" rx="0" /><rect x="210" y="63" width="1" height="1" fill="#000" stroke="none" stroke-width="1" rx="0" /><rect x="211" y="63" width="1" height="1" fill="#000" stroke="none" stroke-width="1" rx="0" /><rect x="213" y="63" width="1" height="1" fill="#000" stroke="none" stroke-width="1" rx="0" /><rect x="215" y="63" width="1" height="1" fill="#000" stroke="none" stroke-width="1" rx="0" /><rect x="216" y="63" width="1" height="1" fill="#000" stroke="none" stroke-width="1" rx="0" /><rect x="218" y="55" width="1" height="1" fill="#000" stroke="none" stroke-width="1" rx="0" /><rect x="218" y="56" width="1" height="1" fill="#000" stroke="none" stroke-width="1" rx="0" /><rect x="218" y="57" width="1" height="1" fill="#000" stroke="none" stroke-width="1" rx="0" /><rect x="218" y="58" width="1" height="1" fill="#000" stroke="none" stroke-width="1" rx="0" /><rect x="218" y="59" width="1" height="1" fill="#000" stroke="none" stroke-width="1" rx="0" /><rect x="218" y="61" width="1" height="1" fill="#000" stroke="none" stroke-width="1" rx="0" /><rect x="218" y="62" width="1" height="1" fill="#000" stroke="none" stroke-width="1" rx="0" /><rect x="218" y="66" width="1" height="1" fill="#000" stroke="none" stroke-width="1" rx="0" /><rect x="218" y="68" width="1" height="1" fill="#000" stroke="none" stroke-width="1" rx="0" /><rect x="218" y="70" width="1" height="1" fill="#000" stroke="none" stroke-width="1" rx="0" /><rect x="219" y="63" width="1" height="1" fill="#000" stroke="none" stroke-width="1" rx="0" /><rect x="219" y="64" width="1" height="1" fill="#000" stroke="none" stroke-width="1" rx="0" /><rect x="219" y="65" width="1" height="1" fill="#000" stroke="none" stroke-width="1" rx="0" /><rect x="219" y="67" width="1" height="1" fill="#000" stroke="none" stroke-width="1" rx="0" /><rect x="219" y="70" width="1" height="1" fill="#000" stroke="none" stroke-width="1" rx="0" /><rect x="220" y="64" width="1" height="1" fill="#000" stroke="none" stroke-width="1" rx="0" /><rect x="220" y="65" width="1" height="1" fill="#000" stroke="none" stroke-width="1" rx="0" /><rect x="220" y="66" width="1" height="1" fill="#000" stroke="none" stroke-width="1" rx="0" /><rect x="220" y="68" width="1" height="1" fill="#000" stroke="none" stroke-width="1" rx="0" /><rect x="220" y="69" width="1" height="1" fill="#000" stroke="none" stroke-width="1" rx="0" /><rect x="221" y="63" width="1" height="1" fill="#000" stroke="none" stroke-width="1" rx="0" /><rect x="221" y="64" width="1" height="1" fill="#000" stroke="none" stroke-width="1" rx="0" /><rect x="221" y="67" width="1" height="1" fill="#000" stroke="none" stroke-width="1" rx="0" /><rect x="222" y="64" width="1" height="1" fill="#000" stroke="none" stroke-width="1" rx="0" /><rect x="222" y="66" width="1" height="1" fill="#000" stroke="none" stroke-width="1" rx="0" /><rect x="222" y="67" width="1" height="1" fill="#000" stroke="none" stroke-width="1" rx="0" /><rect x="222" y="69" width="1" height="1" fill="#000" stroke="none" stroke-width="1" rx="0" /><rect x="222" y="70" width="1" height="1" fill="#000" stroke="none" stroke-width="1" rx="0" /><rect x="223" y="63" width="1" height="1" fill="#000" stroke="none" stroke-width="1" rx="0" /><rect x="223" y="68" width="1" height="1" fill="#000" stroke="none" stroke-width="1" rx="0" /><rect x="224" y="64" width="1" height="1" fill="#000" stroke="none" stroke-width="1" rx="0" /><rect x="224" y="67" width="1" height="1" fill="#000" stroke="none" stroke-width="1" rx="0" /><rect x="224" y="69" width="1" height="1" fill="#000" stroke="none" stroke-width="1" rx="0" /><rect x="225" y="66" width="1" height="1" fill="#000" stroke="none" stroke-width="1" rx="0" /><rect x="225" y="67" width="1" height="1" fill="#000" stroke="none" stroke-width="1" rx="0" /><rect x="225" y="69" width="1" height="1" fill="#000" stroke="none" stroke-width="1" rx="0" /><rect x="225" y="70" width="1" height="1" fill="#000" stroke="none" stroke-width="1" rx="0" /><rect x="210" y="79" width="16" height="16" fill="#fff" stroke="none" stroke-width="1" rx="0" /><rect x="210" y="79" width="1.4" height="16" fill="#000" stroke="none" stroke-width="1" rx="0" /><rect x="210" y="93.6" width="16" height="1.4" fill="#000" stroke="none" stroke-width="1" rx="0" /><rect x="210" y="79" width="1" height="1.2" fill="#000" stroke="none" stroke-width="1" rx="0" /><rect x="225" y="80" width="1" height="1" fill="#000" stroke="none" stroke-width="1" rx="0" /><rect x="212" y="79" width="1" height="1.2" fill="#000" stroke="none" stroke-width="1" rx="0" /><rect x="225" y="82" width="1" height="1" fill="#000" stroke="none" stroke-width="1" rx="0" /><rect x="214" y="79" width="1" height="1.2" fill="#000" stroke="none" stroke-width="1" rx="0" /><rect x="225" y="84" width="1" height="1" fill="#000" stroke="none" stroke-width="1" rx="0" /><rect x="216" y="79" width="1" height="1.2" fill="#000" stroke="none" stroke-width="1" rx="0" /><rect x="225" y="86" width="1" height="1" fill="#000" stroke="none" stroke-width="1" rx="0" /><rect x="218" y="79" width="1" height="1.2" fill="#000" stroke="none" stroke-width="1" rx="0" /><rect x="225" y="88" width="1" height="1" fill="#000" stroke="none" stroke-width="1" rx="0" /><rect x="220" y="79" width="1" height="1.2" fill="#000" stroke="none" stroke-width="1" rx="0" /><rect x="225" y="90" width="1" height="1" fill="#000" stroke="none" stroke-width="1" rx="0" /><rect x="222" y="79" width="1" height="1.2" fill="#000" stroke="none" stroke-width="1" rx="0" /><rect x="225" y="92" width="1" height="1" fill="#000" stroke="none" stroke-width="1" rx="0" /><rect x="224" y="79" width="1" height="1.2" fill="#000" stroke="none" stroke-width="1" rx="0" /><rect x="225" y="94" width="1" height="1" fill="#000" stroke="none" stroke-width="1" rx="0" /><rect x="211" y="80.2" width="1" height="1" fill="#000" stroke="none" stroke-width="1" rx="0" /><rect x="211" y="83.2" width="1" height="1" fill="#000" stroke="none" stroke-width="1" rx="0" /><rect x="211" y="84.2" width="1" height="1" fill="#000" stroke="none" stroke-width="1" rx="0" /><rect x="211" y="86.2" width="1" height="1" fill="#000" stroke="none" stroke-width="1" rx="0" /><rect x="211" y="87.2" width="1" height="1" fill="#000" stroke="none" stroke-width="1" rx="0" /><rect x="211" y="90.2" width="1" height="1" fill="#000" stroke="none" stroke-width="1" rx="0" /><rect x="211" y="91.2" width="1" height="1" fill="#000" stroke="none" stroke-width="1" rx="0" /><rect x="211" y="92.2" width="1" height="1" fill="#000" stroke="none" stroke-width="1" rx="0" /><rect x="212" y="81.2" width="1" height="1" fill="#000" stroke="none" stroke-width="1" rx="0" /><rect x="212" y="86.2" width="1" height="1" fill="#000" stroke="none" stroke-width="1" rx="0" /><rect x="212" y="87.2" width="1" height="1" fill="#000" stroke="none" stroke-width="1" rx="0" /><rect x="212" y="88.2" width="1" height="1" fill="#000" stroke="none" stroke-width="1" rx="0" /><rect x="212" y="89.2" width="1" height="1" fill="#000" stroke="none" stroke-width="1" rx="0" /><rect x="212" y="90.2" width="1" height="1" fill="#000" stroke="none" stroke-width="1" rx="0" /><rect x="212" y="91.2" width="1" height="1" fill="#000" stroke="none" stroke-width="1" rx="0" /><rect x="212" y="92.2" width="1" height="1" fill="#000" stroke="none" stroke-width="1" rx="0" /><rect x="212" y="93.2" width="1" height="1" fill="#000" stroke="none" stroke-width="1" rx="0" /><rect x="213" y="80.2" width="1" height="1" fill="#000" stroke="none" stroke-width="1" rx="0" /><rect x="213" y="82.2" width="1" height="1" fill="#000" stroke="none" stroke-width="1" rx="0" /><rect x="213" y="84.2" width="1" height="1" fill="#000" stroke="none" stroke-width="1" rx="0" /><rect x="213" y="86.2" width="1" height="1" fill="#000" stroke="none" stroke-width="1" rx="0" /><rect x="213" y="87.2" width="1" height="1" fill="#000" stroke="none" stroke-width="1" rx="0" /><rect x="213" y="92.2" width="1" height="1" fill="#000" stroke="none" stroke-width="1" rx="0" /><rect x="213" y="93.2" width="1" height="1" fill="#000" stroke="none" stroke-width="1" rx="0" /><rect x="214" y="80.2" width="1" height="1" fill="#000" stroke="none" stroke-width="1" rx="0" /><rect x="214" y="81.2" width="1" height="1" fill="#000" stroke="none" stroke-width="1" rx="0" /><rect x="214" y="83.2" width="1" height="1" fill="#000" stroke="none" stroke-width="1" rx="0" /><rect x="214" y="85.2" width="1" height="1" fill="#000" stroke="none" stroke-width="1" rx="0" /><rect x="214" y="88.2" width="1" height="1" fill="#000" stroke="none" stroke-width="1" rx="0" /><rect x="214" y="89.2" width="1" height="1" fill="#000" stroke="none" stroke-width="1" rx="0" /><rect x="214" y="91.2" width="1" height="1" fill="#000" stroke="none" stroke-width="1" rx="0" /><rect x="214" y="93.2" width="1" height="1" fill="#000" stroke="none" stroke-width="1" rx="0" /><rect x="215" y="80.2" width="1" height="1" fill="#000" stroke="none" stroke-width="1" rx="0" /><rect x="215" y="83.2" width="1" height="1" fill="#000" stroke="none" stroke-width="1" rx="0" /><rect x="215" y="84.2" width="1" height="1" fill="#000" stroke="none" stroke-width="1" rx="0" /><rect x="215" y="85.2" width="1" height="1" fill="#000" stroke="none" stroke-width="1" rx="0" /><rect x="215" y="88.2" width="1" height="1" fill="#000" stroke="none" stroke-width="1" rx="0" /><rect x="215" y="89.2" width="1" height="1" fill="#000" stroke="none" stroke-width="1" rx="0" /><rect x="215" y="90.2" width="1" height="1" fill="#000" stroke="none" stroke-width="1" rx="0" /><rect x="215" y="91.2" width="1" height="1" fill="#000" stroke="none" stroke-width="1" rx="0" /><rect x="215" y="93.2" width="1" height="1" fill="#000" stroke="none" stroke-width="1" rx="0" /><rect x="216" y="81.2" width="1" height="1" fill="#000" stroke="none" stroke-width="1" rx="0" /><rect x="216" y="82.2" width="1" height="1" fill="#000" stroke="none" stroke-width="1" rx="0" /><rect x="216" y="84.2" width="1" height="1" fill="#000" stroke="none" stroke-width="1" rx="0" /><rect x="216" y="86.2" width="1" height="1" fill="#000" stroke="none" stroke-width="1" rx="0" /><rect x="216" y="87.2" width="1" height="1" fill="#000" stroke="none" stroke-width="1" rx="0" /><rect x="216" y="88.2" width="1" height="1" fill="#000" stroke="none" stroke-width="1" rx="0" /><rect x="216" y="89.2" width="1" height="1" fill="#000" stroke="none" stroke-width="1" rx="0" /><rect x="216" y="92.2" width="1" height="1" fill="#000" stroke="none" stroke-width="1" rx="0" /><rect x="217" y="80.2" width="1" height="1" fill="#000" stroke="none" stroke-width="1" rx="0" /><rect x="217" y="81.2" width="1" height="1" fill="#000" stroke="none" stroke-width="1" rx="0" /><rect x="217" y="84.2" width="1" height="1" fill="#000" stroke="none" stroke-width="1" rx="0" /><rect x="217" y="86.2" width="1" height="1" fill="#000" stroke="none" stroke-width="1" rx="0" /><rect x="217" y="87.2" width="1" height="1" fill="#000" stroke="none" stroke-width="1" rx="0" /><rect x="217" y="89.2" width="1" height="1" fill="#000" stroke="none" stroke-width="1" rx="0" /><rect x="217" y="90.2" width="1" height="1" fill="#000" stroke="none" stroke-width="1" rx="0" /><rect x="217" y="91.2" width="1" height="1" fill="#000" stroke="none" stroke-width="1" rx="0" /><rect x="217" y="92.2" width="1" height="1" fill="#000" stroke="none" stroke-width="1" rx="0" /><rect x="218" y="80.2" width="1" height="1" fill="#000" stroke="none" stroke-width="1" rx="0" /><rect x="218" y="82.2" width="1" height="1" fill="#000" stroke="none" stroke-width="1" rx="0" /><rect x="218" y="83.2" width="1" height="1" fill="#000" stroke="none" stroke-width="1" rx="0" /><rect x="218" y="85.2" width="1" height="1" fill="#000" stroke="none" stroke-width="1" rx="0" /><rect x="218" y="88.2" width="1" height="1" fill="#000" stroke="none" stroke-width="1" rx="0" /><rect x="218" y="89.2" width="1" height="1" fill="#000" stroke="none" stroke-width="1" rx="0" /><rect x="218" y="92.2" width="1" height="1" fill="#000" stroke="none" stroke-width="1" rx="0" /><rect x="218" y="93.2" width="1" height="1" fill="#000" stroke="none" stroke-width="1" rx="0" /><rect x="219" y="82.2" width="1" height="1" fill="#000" stroke="none" stroke-width="1" rx="0" /><rect x="219" y="86.2" width="1" height="1" fill="#000" stroke="none" stroke-width="1" rx="0" /><rect x="219" y="87.2" width="1" height="1" fill="#000" stroke="none" stroke-width="1" rx="0" /><rect x="219" y="88.2" width="1" height="1" fill="#000" stroke="none" stroke-width="1" rx="0" /><rect x="219" y="90.2" width="1" height="1" fill="#000" stroke="none" stroke-width="1" rx="0" /><rect x="219" y="92.2" width="1" height="1" fill="#000" stroke="none" stroke-width="1" rx="0" /><rect x="220" y="81.2" width="1" height="1" fill="#000" stroke="none" stroke-width="1" rx="0" /><rect x="220" y="82.2" width="1" height="1" fill="#000" stroke="none" stroke-width="1" rx="0" /><rect x="220" y="84.2" width="1" height="1" fill="#000" stroke="none" stroke-width="1" rx="0" /><rect x="220" y="85.2" width="1" height="1" fill="#000" stroke="none" stroke-width="1" rx="0" /><rect x="220" y="89.2" width="1" height="1" fill="#000" stroke="none" stroke-width="1" rx="0" /><rect x="220" y="91.2" width="1" height="1" fill="#000" stroke="none" stroke-width="1" rx="0" /><rect x="220" y="92.2" width="1" height="1" fill="#000" stroke="none" stroke-width="1" rx="0" /><rect x="220" y="93.2" width="1" height="1" fill="#000" stroke="none" stroke-width="1" rx="0" /><rect x="221" y="80.2" width="1" height="1" fill="#000" stroke="none" stroke-width="1" rx="0" /><rect x="221" y="81.2" width="1" height="1" fill="#000" stroke="none" stroke-width="1" rx="0" /><rect x="221" y="82.2" width="1" height="1" fill="#000" stroke="none" stroke-width="1" rx="0" /><rect x="221" y="83.2" width="1" height="1" fill="#000" stroke="none" stroke-width="1" rx="0" /><rect x="221" y="85.2" width="1" height="1" fill="#000" stroke="none" stroke-width="1" rx="0" /><rect x="221" y="86.2" width="1" height="1" fill="#000" stroke="none" stroke-width="1" rx="0" /><rect x="221" y="92.2" width="1" height="1" fill="#000" stroke="none" stroke-width="1" rx="0" /><rect x="221" y="93.2" width="1" height="1" fill="#000" stroke="none" stroke-width="1" rx="0" /><rect x="222" y="80.2" width="1" height="1" fill="#000" stroke="none" stroke-width="1" rx="0" /><rect x="222" y="84.2" width="1" height="1" fill="#000" stroke="none" stroke-width="1" rx="0" /><rect x="222" y="86.2" width="1" height="1" fill="#000" stroke="none" stroke-width="1" rx="0" /><rect x="222" y="88.2" width="1" height="1" fill="#000" stroke="none" stroke-width="1" rx="0" /><rect x="222" y="90.2" width="1" height="1" fill="#000" stroke="none" stroke-width="1" rx="0" /><rect x="222" y="91.2" width="1" height="1" fill="#000" stroke="none" stroke-width="1" rx="0" /><rect x="223" y="84.2" width="1" height="1" fill="#000" stroke="none" stroke-width="1" rx="0" /><rect x="223" y="88.2" width="1" height="1" fill="#000" stroke="none" stroke-width="1" rx="0" /><rect x="223" y="93.2" width="1" height="1" fill="#000" stroke="none" stroke-width="1" rx="0" /><rect x="224" y="82.2" width="1" height="1" fill="#000" stroke="none" stroke-width="1" rx="0" /><rect x="224" y="87.2" width="1" height="1" fill="#000" stroke="none" stroke-width="1" rx="0" /><rect x="224" y="90.2" width="1" height="1" fill="#000" stroke="none" stroke-width="1" rx="0" /><rect x="224" y="92.2" width="1" height="1" fill="#000" stroke="none" stroke-width="1" rx="0" /><path d="M211.4 110 V115.8 M224.39999999999998 110 V115.8 M211.4 112.4 H224.39999999999998" fill="none" stroke="#6e6e6e" stroke-width="1.5" /><path d="M215.5 115.6 C216.7 112.2 217.5 113.8 218.2 114.9 C219.0 116.0 219.7 115.0 220.5 112.8" fill="none" stroke="#eda41c" stroke-width="1.2" /><text x="217.89999999999998" y="110" font-size="8.2" font-weight="bold" fill="#6a6a6a" text-anchor="middle" letter-spacing="-0.35">ø</text><path d="M300.0 63.2 V68.2 M314.0 63.2 V68.2 M300.0 65 H314.0" fill="none" stroke="#6e6e6e" stroke-width="1.5" /><path d="M304.6 68.2 C305.9 64.8 306.6 66.4 307.4 67.5 C308.1 68.6 308.9 67.6 309.6 65.4" fill="none" stroke="#eda41c" stroke-width="1.2" /><text x="307.0" y="62.8" font-size="7" font-weight="bold" fill="#6a6a6a" text-anchor="middle" letter-spacing="-0.35">øH7</text><path d="M300.0 87.2 V92.2 M314.0 87.2 V92.2 M300.0 89.4 H314.0" fill="none" stroke="#6e6e6e" stroke-width="1.5" /><path d="M304.6 92.6 C305.9 89.2 306.6 90.8 307.4 91.9 C308.1 93.0 308.9 92.0 309.6 89.8" fill="none" stroke="#eda41c" stroke-width="1.2" /><text x="307.0" y="86.4" font-size="7.4" font-weight="bold" fill="#6a6a6a" text-anchor="middle" letter-spacing="-0.35">M</text><path d="M300.0 111.2 V116.2 M314.0 111.2 V116.2 M300.0 113.4 H314.0" fill="none" stroke="#6e6e6e" stroke-width="1.5" /><path d="M304.6 116.6 C305.9 113.2 306.6 114.8 307.4 115.9 C308.1 117.0 308.9 116.0 309.6 113.8" fill="none" stroke="#eda41c" stroke-width="1.2" /><text x="307.0" y="110.8" font-size="6.6" font-weight="bold" fill="#6a6a6a" text-anchor="middle" letter-spacing="-0.35">x45°</text><path d="M396.8 62.2 V68 M411.0 62.2 V68 M396.8 64.4 H411.0" fill="none" stroke="#6e6e6e" stroke-width="1.5" /><path d="M401.5 67.6 C402.8 64.2 403.5 65.8 404.2 66.9 C405.0 68.0 405.8 67.0 406.5 64.8" fill="none" stroke="#eda41c" stroke-width="1.2" /><text x="403.9" y="62.4" font-size="6.6" font-weight="bold" fill="#6a6a6a" text-anchor="middle" letter-spacing="-0.35">±0.1</text><path d="M396.8 86.6 V92 M411.0 86.6 V92 M396.8 88.8 H411.0" fill="none" stroke="#6e6e6e" stroke-width="1.5" /><path d="M401.5 92.0 C402.8 88.6 403.5 90.2 404.2 91.3 C405.0 92.4 405.8 91.4 406.5 89.2" fill="none" stroke="#eda41c" stroke-width="1.2" /><text x="403.9" y="86.8" font-size="7.4" font-weight="bold" fill="#6a6a6a" text-anchor="middle" letter-spacing="-0.35">( )</text><path d="M396.8 110.6 V116 M411.0 110.6 V116 M396.8 113 H411.0" fill="none" stroke="#6e6e6e" stroke-width="1.5" /><path d="M401.5 116.2 C402.8 112.8 403.5 114.4 404.2 115.5 C405.0 116.6 405.8 115.6 406.5 113.4" fill="none" stroke="#eda41c" stroke-width="1.2" /><text x="403.9" y="111.2" font-size="9.4" font-weight="bold" fill="#6a6a6a" text-anchor="middle" letter-spacing="-0.35">½</text><path d="M490.8 62 V68 M504.59999999999997 62 V68 M490.8 64.6 H504.59999999999997" fill="none" stroke="#6e6e6e" stroke-width="1.5" /><path d="M495.3 67.8 C496.6 64.4 497.3 66.0 498.1 67.1 C498.8 68.2 499.6 67.2 500.3 65.0" fill="none" stroke="#eda41c" stroke-width="1.2" /><path d="M495.2 57 L501 62.2 M501 57 L495.2 62.2" fill="none" stroke="#c62828" stroke-width="1.6" /><path d="M555 57.4 L559.6 55 L564.4 57.4 V61.6 L559.6 64 L555 61.6 Z" fill="#c9c9c9" stroke="none" stroke-width="1" /><path d="M555 57.4 L559.6 59.6 L564.4 57.4 M559.6 59.6 V64" fill="none" stroke="#b0b0b0" stroke-width="0.8" /><rect x="558.4" y="63.4" width="10.4" height="7" fill="#fff" stroke="#6e6e6e" stroke-width="1.2" rx="0" /><path d="M564 69.8 V67.6 H568.4" fill="none" stroke="#bbb" stroke-width="1" /><path d="M558.6 60.6 C557.6 63.6 558.8 66 561.6 66" fill="none" stroke="#2b8be0" stroke-width="1.6" /><path d="M560.6 63.8 L563 66 L560.6 68.2 Z" fill="#2b8be0" stroke="none" stroke-width="1" /><path d="M555 81.4 L559.6 79 L564.4 81.4 V86.2 L559.6 88.6 L555 86.2 Z" fill="#5a5a5a" stroke="none" stroke-width="1" /><path d="M555 81.4 L559.6 83.6 L564.4 81.4 M559.6 83.6 V88.6" fill="none" stroke="#444" stroke-width="0.8" /><rect x="558.4" y="87.8" width="10.8" height="6.8" fill="#fff" stroke="#c4c4c4" stroke-width="1.2" rx="0" /><path d="M564.4 93.8 V91.8 H568.6" fill="none" stroke="#ccc" stroke-width="1" /><path d="M566 88.8 C568.6 88.4 569 85.6 566.4 84" fill="none" stroke="#2b8be0" stroke-width="1.6" /><path d="M567.6 82.4 L564 83.4 L566.6 86.2 Z" fill="#2b8be0" stroke="none" stroke-width="1" /><path d="M688 55.4 H693.4 V58.8 H696.2 V65.8 H688 Z" fill="#666" stroke="none" stroke-width="1" /><rect x="694" y="56.0" width="4" height="2" fill="#c0283c" stroke="none" stroke-width="1" rx="0" /><path d="M697.6 55.0 L700 57.0 L697.6 59.0 Z" fill="#c0283c" stroke="none" stroke-width="1" /><path d="M690.0 64.0 C692.2 60.6 693.6 62.2 695.0 63.3 C696.3 64.4 697.6 63.4 699.0 61.2" fill="none" stroke="#eda41c" stroke-width="2.4" /><text x="692.2" y="70.6" font-size="5.4" font-weight="bold" fill="#5a5a5a" text-anchor="middle" letter-spacing="-0.3">PDF</text><path d="M688 79.4 H693.4 V82.80000000000001 H696.2 V89.80000000000001 H688 Z" fill="#666" stroke="none" stroke-width="1" /><rect x="694" y="80.0" width="4" height="2" fill="#c0283c" stroke="none" stroke-width="1" rx="0" /><path d="M697.6 79.0 L700 81.0 L697.6 83.0 Z" fill="#c0283c" stroke="none" stroke-width="1" /><path d="M690.0 88.0 C692.2 84.6 693.6 86.2 695.0 87.3 C696.3 88.4 697.6 87.4 699.0 85.2" fill="none" stroke="#eda41c" stroke-width="2.4" /><text x="692.2" y="94.60000000000001" font-size="5.0" font-weight="bold" fill="#5a5a5a" text-anchor="middle" letter-spacing="-0.3">DWG</text><path d="M688 103.4 H693.4 V106.80000000000001 H696.2 V113.80000000000001 H688 Z" fill="#666" stroke="none" stroke-width="1" /><rect x="694" y="104.0" width="4" height="2" fill="#c0283c" stroke="none" stroke-width="1" rx="0" /><path d="M697.6 103.0 L700 105.0 L697.6 107.0 Z" fill="#c0283c" stroke="none" stroke-width="1" /><path d="M690.0 112.0 C692.2 108.6 693.6 110.2 695.0 111.3 C696.3 112.4 697.6 111.4 699.0 109.2" fill="none" stroke="#eda41c" stroke-width="2.4" /><text x="692.2" y="118.60000000000001" font-size="5.4" font-weight="bold" fill="#5a5a5a" text-anchor="middle" letter-spacing="-0.3">DXF</text><path d="M788 103.4 H793.4 V106.80000000000001 H796.2 V113.80000000000001 H788 Z" fill="#666" stroke="none" stroke-width="1" /><rect x="794" y="104.0" width="4" height="2" fill="#c0283c" stroke="none" stroke-width="1" rx="0" /><path d="M797.6 103.0 L800 105.0 L797.6 107.0 Z" fill="#c0283c" stroke="none" stroke-width="1" /><path d="M790.0 112.0 C792.2 108.6 793.6 110.2 795.0 111.3 C796.3 112.4 797.6 111.4 799.0 109.2" fill="none" stroke="#eda41c" stroke-width="2.4" /><text x="792.2" y="118.60000000000001" font-size="5.4" font-weight="bold" fill="#5a5a5a" text-anchor="middle" letter-spacing="-0.3">PDF</text><rect x="785" y="58.4" width="11.4" height="11.2" fill="#5a5a5a" stroke="none" stroke-width="1" rx="1" /><rect x="787" y="59.6" width="6" height="2.6" fill="#d8d8d8" stroke="none" stroke-width="1" rx="0" /><path d="M788.4 60 V61.8 M790 60 V61.8 M791.6 60 V61.8" fill="none" stroke="#666" stroke-width="0.7" /><rect x="786.2" y="66.8" width="1" height="1.6" fill="#ddd" stroke="none" stroke-width="1" rx="0" /><circle cx="796.6" cy="59.4" r="3.9" fill="#f4f4f4" stroke="#8a8a8a" stroke-width="1" /><path d="M796.6 56.6 V59.6 L798 61.4" fill="none" stroke="#8a8a8a" stroke-width="0.9" /><path d="M790.6 67.8 C792.5 64.4 793.6 66.0 794.7 67.1 C795.8 68.2 796.9 67.2 798.0 65.0" fill="none" stroke="#eda41c" stroke-width="2.2" /><path d="M786.4 84.8 V91.6 M799 84.8 V91.6 M786.4 87.8 H799" fill="none" stroke="#6e6e6e" stroke-width="1.5" /><path d="M786.8 85 H790 M795.6 85 H798.8" fill="none" stroke="#c62828" stroke-width="1.3" /><path d="M791 83 L794.4 86.6 M794.4 83 L791 86.6" fill="none" stroke="#555" stroke-width="1" /><path d="M790.0 91.8 C791.4 88.4 792.2 90.0 793.1 91.1 C793.9 92.2 794.8 91.2 795.6 89.0" fill="none" stroke="#eda41c" stroke-width="1.3" /><rect x="877.4" y="56.6" width="8.4" height="5" fill="#fafafa" stroke="#7a7a7a" stroke-width="1" rx="0" /><path d="M874.4 63 C874.4 61.8 875.2 61.2 876.4 61.2 H887 C888.2 61.2 889 61.8 889 63 V67 H874.4 Z" fill="#666" stroke="none" stroke-width="1" /><path d="M877 66.4 H886" fill="none" stroke="#444" stroke-width="1" /><text x="887.2" y="65" font-size="10.5" font-weight="bold" fill="#c4202e" text-anchor="middle" >?</text><path d="M880.0 69.8 C882.4 66.4 883.8 68.0 885.2 69.1 C886.6 70.2 888.0 69.2 889.4 67.0" fill="none" stroke="#eda41c" stroke-width="2.4" /><path d="M877.4 85.4 V80 H883.4 L886 82.6 V85.4" fill="#fafafa" stroke="#7a7a7a" stroke-width="1" /><path d="M874.4 87.2 C874.4 86 875.2 85.4 876.4 85.4 H887 C888.2 85.4 889 86 889 87.2 V91.4 H874.4 Z" fill="#666" stroke="none" stroke-width="1" /><path d="M885 88.6 H887.4" fill="none" stroke="#ddd" stroke-width="0.8" /><path d="M880.4 93.8 C882.8 90.4 884.2 92.0 885.7 93.1 C887.1 94.2 888.6 93.2 890.0 91.0" fill="none" stroke="#eda41c" stroke-width="2.4" /><rect x="875" y="103.6" width="10.6" height="13.6" fill="#fff" stroke="#666" stroke-width="1.5" rx="1" /><path d="M875.6 107.8 H885" fill="none" stroke="#666" stroke-width="1.2" /><rect x="876.8" y="109.6" width="1.8" height="1.8" fill="#666" stroke="none" stroke-width="1" rx="0" /><rect x="876.8" y="112.6" width="1.8" height="1.8" fill="#666" stroke="none" stroke-width="1" rx="0" /><rect x="880.0" y="109.6" width="1.8" height="1.8" fill="#666" stroke="none" stroke-width="1" rx="0" /><rect x="880.0" y="112.6" width="1.8" height="1.8" fill="#666" stroke="none" stroke-width="1" rx="0" /><rect x="883.0" y="109.6" width="1.8" height="1.8" fill="#666" stroke="none" stroke-width="1" rx="0" /><rect x="883.0" y="112.6" width="1.8" height="1.8" fill="#666" stroke="none" stroke-width="1" rx="0" /><path d="M878.8 117.8 C881.3 114.4 882.8 116.0 884.3 117.1 C885.8 118.2 887.3 117.2 888.8 115.0" fill="none" stroke="#eda41c" stroke-width="2.4" /><rect x="997.4" y="56.4" width="14.6" height="11.4" fill="#5f5f5f" stroke="none" stroke-width="1" rx="1" /><rect x="1000.2" y="57.8" width="10.4" height="6.8" fill="#fff" stroke="#c62828" stroke-width="0.9" rx="0" /><rect x="1001.6" y="59.2" width="7.6" height="3.8" fill="#b8b8b8" stroke="none" stroke-width="1" rx="0" /><path d="M1003.2 69.2 C1005.7 65.8 1007.1 67.4 1008.6 68.5 C1010.1 69.6 1011.5 68.6 1013.0 66.4" fill="none" stroke="#eda41c" stroke-width="2.4" /><rect x="997.8" y="80.4" width="14" height="11.4" fill="#a9a9a9" stroke="#c62828" stroke-width="1.1" rx="0" /><rect x="1007.2" y="83.4" width="1.8" height="1.8" fill="#fff" stroke="none" stroke-width="1" rx="0" /><path d="M1003.2 92.6 C1005.7 89.2 1007.1 90.8 1008.6 91.9 C1010.1 93.0 1011.5 92.0 1013.0 89.8" fill="none" stroke="#eda41c" stroke-width="2.4" /><rect x="998.8" y="106.4" width="12.6" height="8.6" fill="#fff" stroke="#666" stroke-width="1.5" rx="0" /><path d="M997.2 115.4 H1013.2 L1012.2 117.2 H998.2 Z" fill="#666" stroke="none" stroke-width="1" /><circle cx="1005" cy="110.8" r="2.1" fill="none" stroke="#555" stroke-width="1.7" /><path d="M1005 107.6 V114 M1001.8 110.8 H1008.2 M1002.8 108.6 L1007.2 113 M1007.2 108.6 L1002.8 113" fill="none" stroke="#555" stroke-width="1.1" /><circle cx="1005" cy="110.8" r="0.9" fill="#fff" stroke="none" stroke-width="1" /><path d="M999 108.4 C999.4 105.2 1001.6 104 1003.8 104.6" fill="none" stroke="#eda41c" stroke-width="1.6" /><path d="M1002.4 102.8 L1005.2 105 L1002 106.6 Z" fill="#eda41c" stroke="none" stroke-width="1" /><path d="M1133.4 69.6 V59.2 H1138 L1139.2 60.6 H1146 V62.4" fill="#5a5a5a" stroke="#5a5a5a" stroke-width="0.8" /><path d="M1133.4 69.8 L1135.6 62.4 H1148.8 L1146.4 69.8 Z" fill="#5a5a5a" stroke="none" stroke-width="1" /><path d="M1135.8 63.6 L1134.4 68.6" fill="none" stroke="#999" stroke-width="0.7" /><path d="M1142.4 66 C1145.6 65.4 1146 62.4 1145.8 60" fill="none" stroke="#eda41c" stroke-width="1.7" /><path d="M1143 60.6 L1145.8 57.2 L1148.6 60.6 Z" fill="#eda41c" stroke="none" stroke-width="1" /><path d="M1136.4 79.4 H1140.6 V82.6 H1144 V88.4 H1136.4 Z" fill="#5f5f5f" stroke="none" stroke-width="1" /><path d="M1142.4 81.4 H1147" fill="none" stroke="#eda41c" stroke-width="1.3" /><path d="M1146 79.4 L1148.8 81.4 L1146 83.4 Z" fill="#eda41c" stroke="none" stroke-width="1" /><path d="M1138.0 87.2 C1140.1 83.8 1141.4 85.4 1142.6 86.5 C1143.9 87.6 1145.1 86.6 1146.4 84.4" fill="none" stroke="#eda41c" stroke-width="2.2" /><text x="1141" y="95" font-size="6.4" font-weight="normal" fill="#5a5a5a" text-anchor="middle" letter-spacing="-0.2">ZIP</text><path d="M1133.4 116.8 V107.2 H1138 L1139.2 108.6 H1145 V110.4" fill="#5a5a5a" stroke="#5a5a5a" stroke-width="0.8" /><path d="M1133.4 117 L1135.6 110.2 H1146.6 L1144.4 117 Z" fill="#5a5a5a" stroke="none" stroke-width="1" /><path d="M1135.8 111.4 L1134.4 116" fill="none" stroke="#999" stroke-width="0.7" /><path d="M1143.4 110 L1149 115 M1149 110 L1143.4 115" fill="none" stroke="#c4202e" stroke-width="1.7" /><circle cx="1254.6" cy="62.6" r="6.8" fill="#f5f5f5" stroke="none" stroke-width="1" /><circle cx="1254.6" cy="62.6" r="6.8" fill="none" stroke="#666" stroke-width="1.3" /><ellipse cx="1254.6" cy="62.6" rx="3.06" ry="6.8" fill="none" stroke="#666" stroke-width="1.10"/><path d="M1247.8 62.6 H1261.3999999999999 M1254.6 55.800000000000004 V69.4" fill="none" stroke="#666" stroke-width="1.105" /><path d="M1248.75 59.20 H1260.45 M1248.75 66.00 H1260.45" fill="none" stroke="#666" stroke-width="0.9750000000000001" /><path d="M1254.8 63.2 L1259.6 65.6 L1257.8 66.4 L1259.2 69.6 L1257.8 70.2 L1256.6 67 L1255 68.4 Z" fill="#eda41c" stroke="#f5f5f5" stroke-width="0.5" /><defs><linearGradient id="tvg" x1="0" y1="0" x2="0" y2="1"><stop offset="0" stop-color="#0f8fe9"/><stop offset="1" stop-color="#1a6fd2"/></linearGradient></defs><rect x="1366.4" y="54.6" width="30.6" height="30.6" fill="url(#tvg)" stroke="none" stroke-width="1" rx="2.6" /><circle cx="1381.6" cy="69.6" r="12.2" fill="#fff" stroke="none" stroke-width="1" /><path d="M1371.4 69.6 L1377.6 65.6 V68.4 H1385.6 V65.6 L1391.8 69.6 L1385.6 73.6 V70.8 H1377.6 V73.6 Z" fill="#1278df" stroke="none" stroke-width="1" /><circle cx="1434" cy="68.2" r="13.2" fill="none" stroke="#666" stroke-width="2.4" /><ellipse cx="1434" cy="68.2" rx="5.94" ry="13.2" fill="none" stroke="#666" stroke-width="2.04"/><path d="M1420.8 68.2 H1447.2 M1434 55.0 V81.4" fill="none" stroke="#666" stroke-width="2.04" /><path d="M1422.65 61.60 H1445.35 M1422.65 74.80 H1445.35" fill="none" stroke="#666" stroke-width="1.7999999999999998" /><rect x="1436" y="69" width="12" height="16" fill="#f5f5f5" stroke="none" stroke-width="1" rx="0" /><text x="1442" y="84.4" font-size="20" font-weight="bold" fill="#eda41c" text-anchor="middle" >?</text><path d="M41.6 151.8 L50.2 160.2 M50.2 151.8 L41.6 160.2" fill="none" stroke="#555" stroke-width="1.5" /><path d="M99.2 155.8 H108.8 M104 151 V160.6" fill="none" stroke="#555" stroke-width="1.9" /><circle cx="180.6" cy="155.2" r="5.2" fill="none" stroke="#555" stroke-width="1.6" /><path d="M184.4 159 L188.6 163.2" fill="none" stroke="#555" stroke-width="2" /><path d="M200 151 H214 M200 156 H214 M200 161 H214" fill="none" stroke="#555" stroke-width="2" /><rect x="2.6" y="170.8" width="15" height="14.6" fill="#fff" stroke="#444" stroke-width="1.2" rx="0" /><rect x="4.6" y="172.4" width="3.6" height="3" fill="#5b9bd8" stroke="none" stroke-width="1" rx="0" /><rect x="8.4" y="172.6" width="2.2" height="2.4" fill="#fff" stroke="#444" stroke-width="0.7" rx="0" /><rect x="4.6" y="177" width="3.2" height="3.2" fill="#5b9bd8" stroke="none" stroke-width="1" rx="0" /><rect x="4.8" y="180.8" width="2.6" height="2.6" fill="#fff" stroke="#444" stroke-width="0.7" rx="0" /><rect x="8.4" y="180.8" width="2.2" height="2.6" fill="#fff" stroke="#444" stroke-width="0.7" rx="0" /><rect x="12.6" y="177" width="3.2" height="3.6" fill="#5b9bd8" stroke="none" stroke-width="1" rx="0" /><rect x="12.8" y="181" width="2.6" height="2.4" fill="#fff" stroke="#444" stroke-width="0.7" rx="0" /><path d="M8.2 188 L8.2 194" fill="none" stroke="#9a9a9a" stroke-width="1" stroke-dasharray="1 1.5"/><path d="M8.2 203 L8.2 212" fill="none" stroke="#9a9a9a" stroke-width="1" stroke-dasharray="1 1.5"/><path d="M13 198.2 L18 198.2" fill="none" stroke="#9a9a9a" stroke-width="1" stroke-dasharray="1 1.5"/><path d="M13 218.2 L18 218.2" fill="none" stroke="#9a9a9a" stroke-width="1" stroke-dasharray="1 1.5"/><path d="M24.4 227 L24.4 252" fill="none" stroke="#9a9a9a" stroke-width="1" stroke-dasharray="1 1.5"/><path d="M24.4 264 L24.4 272" fill="none" stroke="#9a9a9a" stroke-width="1" stroke-dasharray="1 1.5"/><path d="M24.4 284 L24.4 292" fill="none" stroke="#9a9a9a" stroke-width="1" stroke-dasharray="1 1.5"/><path d="M26 238.4 L33 238.4" fill="none" stroke="#9a9a9a" stroke-width="1" stroke-dasharray="1 1.5"/><path d="M29 258.4 L33 258.4" fill="none" stroke="#9a9a9a" stroke-width="1" stroke-dasharray="1 1.5"/><path d="M29 278.4 L33 278.4" fill="none" stroke="#9a9a9a" stroke-width="1" stroke-dasharray="1 1.5"/><path d="M29 298.4 L33 298.4" fill="none" stroke="#9a9a9a" stroke-width="1" stroke-dasharray="1 1.5"/><path d="M4.2 198.1 H11.8 M8 194.2 V202.0" fill="none" stroke="#777" stroke-width="1.8" /><path d="M4.2 217.8 H11.8" fill="none" stroke="#222" stroke-width="2" /><path d="M20.2 258.1 H27.8 M24 254.20000000000002 V262.0" fill="none" stroke="#777" stroke-width="1.8" /><path d="M20.2 278.1 H27.8 M24 274.20000000000005 V282.0" fill="none" stroke="#777" stroke-width="1.8" /><path d="M20.2 298.1 H27.8 M24 294.20000000000005 V302.0" fill="none" stroke="#777" stroke-width="1.8" /><path d="M18.4 191.2 H24.6 L25.6 193.4 H33.6 V204.6 H18.4 Z" fill="#f2bc6e" stroke="#d69a45" stroke-width="0.9" /><path d="M18.6 193.4 H25.4" fill="none" stroke="#d69a45" stroke-width="0.7" /><rect x="18.6" y="212.6" width="15" height="10.8" fill="#fff" stroke="#444" stroke-width="1.3" rx="0" /><rect x="25.6" y="219.4" width="7.6" height="3.6" fill="#fff" stroke="#555" stroke-width="0.9" rx="0" /><path d="M25.6 221.2 H33 M29 219.4 V221.2" fill="none" stroke="#555" stroke-width="0.8" /><rect x="34.6" y="232.6" width="15" height="10.8" fill="#fff" stroke="#2b84d6" stroke-width="1.4" rx="0" /><path d="M40.6 241.4 V238.8 H47.8" fill="none" stroke="#444" stroke-width="1.1" /><path d="M41 263.2 H34.6 V252.8 H49.6 V259" fill="none" stroke="#555" stroke-width="1.2" /><rect x="41" y="259" width="9" height="4.8" fill="#5b9bd8" stroke="none" stroke-width="1" rx="0" /><rect x="35.4" y="271.4" width="13.6" height="13.2" fill="none" stroke="#333" stroke-width="1.1" rx="0" stroke-dasharray="2 1.4"/><rect x="37.2" y="277.4" width="6" height="5.4" fill="#5b9bd8" stroke="none" stroke-width="1" rx="0" /><path d="M37.2 274.4 H43 M37.2 273.2 V275.6 M43 273.2 V275.6 M46 277.6 V282.6 M44.8 277.6 H47.2 M44.8 282.6 H47.2" fill="none" stroke="#444" stroke-width="0.8" /><rect x="34.2" y="290.2" width="14.8" height="4.2" fill="#5b9bd8" stroke="none" stroke-width="1" rx="0" /><path d="M41.4 290.2 V294.4" fill="none" stroke="#4a86c0" stroke-width="0.6" /><path d="M34.8 296.4 V299.4 M41.4 296 V298.2 M48.6 296.4 V299.4" fill="none" stroke="#444" stroke-width="1" /><path d="M34.8 301 H41.6 V302.6 H48.6 V305.4 H34.8 Z" fill="#fff" stroke="#444" stroke-width="1.2" /><path d="M11.4 1042 L7 1046.4 L11.4 1050.8" fill="none" stroke="#8a8a8a" stroke-width="1.3" /><path d="M209 1042 L213.4 1046.4 L209 1050.8" fill="none" stroke="#666" stroke-width="1.3" /><path d="M379.6 1039 L387.6 1047 M387.6 1039 L379.6 1047" fill="none" stroke="#555" stroke-width="1.4" /><path d="M555.4 1037.4 L563.6 1045.6 M563.6 1037.4 L555.4 1045.6" fill="none" stroke="#555" stroke-width="1.4" /><path d="M1901 1038.4 H1915 M1901 1043 H1915 M1901 1047.6 H1915" fill="none" stroke="#555" stroke-width="1.5" /><rect x="1866.8" y="158.6" width="8.6" height="2" fill="#44505f" stroke="none" stroke-width="1" rx="0" /><path d="M1886.6 151 H1898 V160.4 H1886.6 Z M1892.6 151 V160.4 M1892.6 155.4 H1898" fill="none" stroke="#44505f" stroke-width="1.2" /><path d="M1907.6 151 L1917.6 160.6 M1917.6 151 L1907.6 160.6" fill="none" stroke="#44505f" stroke-width="1.5" /><rect x="1885.2" y="168.8" width="33" height="199.4" fill="#8795a9" stroke="#4d5b70" stroke-width="1.4" rx="4.5" /><circle cx="1910.6" cy="176" r="3.2" fill="#b9c2cf" stroke="#5a677a" stroke-width="0.8" /><path d="M1909.2 174.6 L1912 177.4 M1912 174.6 L1909.2 177.4" fill="none" stroke="#5a677a" stroke-width="0.8" /><circle cx="1910.6" cy="360.6" r="3.2" fill="#b9c2cf" stroke="#5a677a" stroke-width="0.8" /><path d="M1908.8 359.4 H1912.4 L1910.6 362.2 Z" fill="#5a677a" stroke="none" stroke-width="1" /><path d="M1890 202 C1890 196 1894 192.6 1900 192.6 H1909.4 V204 C1909.4 209 1905 211.6 1899.6 211.6 C1894 211.6 1890 208 1890 202 Z" fill="#bcc4cf" stroke="#5e6b7e" stroke-width="1" /><circle cx="1899.4" cy="201.6" r="4.4" fill="#aab3c0" stroke="#5e6b7e" stroke-width="1" /><path d="M1902.6 204.8 L1906 208.2" fill="none" stroke="#5e6b7e" stroke-width="1" /><text x="1908" y="213.4" font-size="8" font-weight="normal" fill="#34558f" text-anchor="middle" >2D</text><path d="M1889 220.4 H1914" fill="none" stroke="#6a778a" stroke-width="1" /><path d="M1890.2 237 C1892 236 1894 238.4 1895 240 L1894.4 230.4 C1894.4 228.4 1896.8 228.4 1897 230.4 L1897.6 236 L1898.2 228.4 C1898.4 226.6 1900.8 226.8 1900.8 228.6 L1901 236 L1902.4 229.6 C1902.8 227.8 1905 228.2 1904.8 230 L1904.2 237 L1906.6 232.6 C1907.6 231 1909.6 232 1909 233.8 C1907.6 238 1907.4 242 1905.6 245.4 C1904 248.8 1898 249.8 1895.4 247.2 C1893 244.6 1891.6 240.4 1890.2 237 Z" fill="#bcc4cf" stroke="#5e6b7e" stroke-width="1" /><path d="M1889.6 264.6 H1898.6 M1894 260 V269.2 M1889.6 272.6 H1898.6" fill="none" stroke="#bcc4cf" stroke-width="1.6" /><circle cx="1904.4" cy="273.6" r="4.2" fill="#bcc4cf" stroke="#5e6b7e" stroke-width="1" /><path d="M1907.4 276.8 L1912 281.2" fill="none" stroke="#5e6b7e" stroke-width="2" /><path d="M1890.4 291.2 H1900.4 L1903.6 294.6 V306.6 H1890.4 Z" fill="#bcc4cf" stroke="#5e6b7e" stroke-width="0.9" /><circle cx="1905" cy="303.6" r="4.2" fill="#aab3c0" stroke="#5e6b7e" stroke-width="1" /><path d="M1908 306.8 L1912 310.8" fill="none" stroke="#5e6b7e" stroke-width="2" /><rect x="1890" y="323.2" width="14.6" height="14.4" fill="none" stroke="#bcc4cf" stroke-width="1.2" rx="0" /><circle cx="1905.2" cy="337" r="4.2" fill="#bcc4cf" stroke="#5e6b7e" stroke-width="1" /><path d="M1908.2 340.2 L1912.4 344.4" fill="none" stroke="#5e6b7e" stroke-width="2" /><path d="M608.5 460.8 V476.6 L612 473.4 L614.6 479.4 L616.8 478.4 L614.2 472.6 L619 472.2 Z" fill="#fff" stroke="#111" stroke-width="1" /></svg>
</body></html>
